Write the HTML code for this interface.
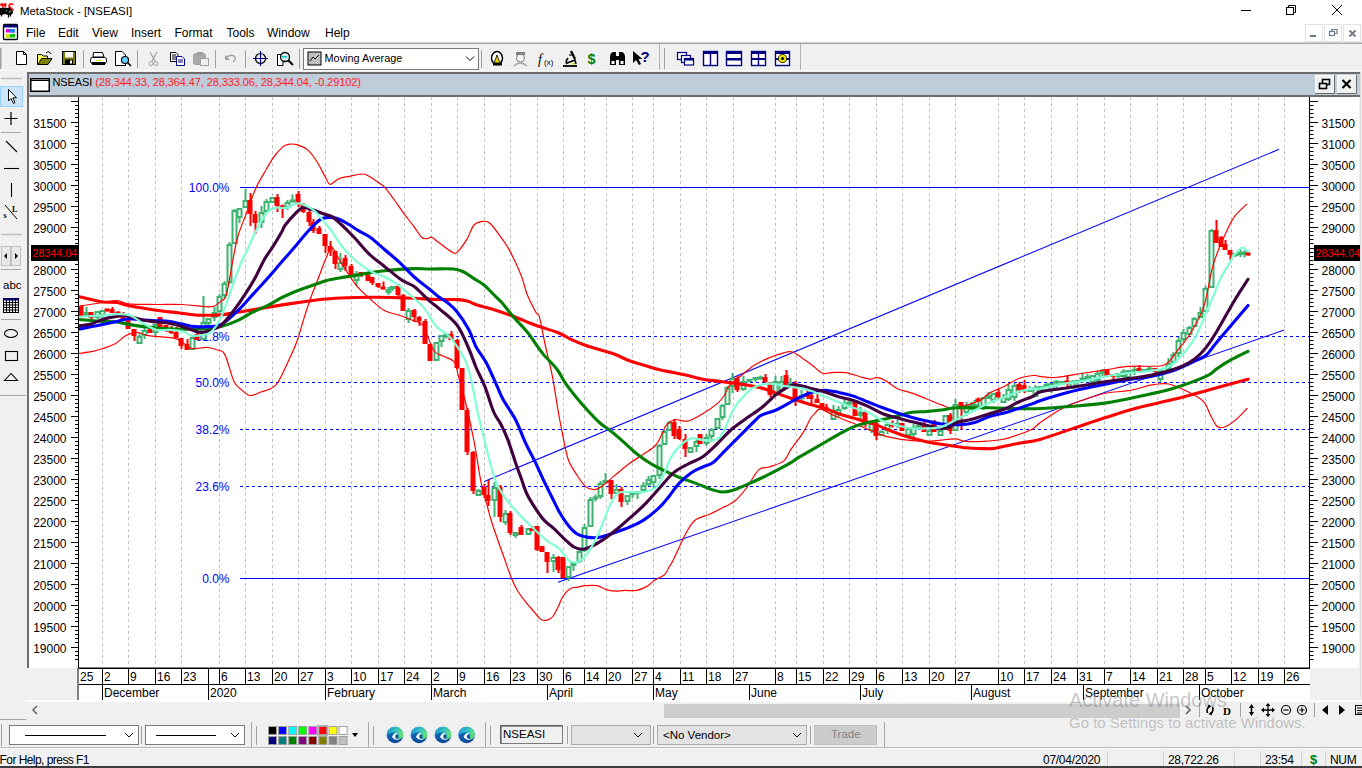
<!DOCTYPE html><html><head><meta charset='utf-8'><style>
*{margin:0;padding:0;box-sizing:border-box}
html,body{width:1362px;height:768px;overflow:hidden;background:#f0f0f0;font-family:"Liberation Sans",sans-serif;font-size:12px;color:#000}
.a{position:absolute}
.t{position:absolute;white-space:nowrap;line-height:1}
</style></head><body><div class="a" style="left:0;top:0;width:1362px;height:43px;background:#fff"></div>
<div class="a" style="left:0;top:42px;width:1362px;height:1px;background:#d0d0d0"></div>
<div class="a" style="left:0;top:43px;width:1362px;height:1px;background:#a8a8a8"></div>
<div class="t" style="left:20px;top:6px;font-size:11.4px">MetaStock - [NSEASI]</div>
<div class="t" style="left:26px;top:27px;font-size:12px">File</div>
<div class="t" style="left:58px;top:27px;font-size:12px">Edit</div>
<div class="t" style="left:92px;top:27px;font-size:12px">View</div>
<div class="t" style="left:131px;top:27px;font-size:12px">Insert</div>
<div class="t" style="left:174.5px;top:27px;font-size:12px">Format</div>
<div class="t" style="left:226.5px;top:27px;font-size:12px">Tools</div>
<div class="t" style="left:267px;top:27px;font-size:12px">Window</div>
<div class="t" style="left:325px;top:27px;font-size:12px">Help</div>
<div class="a" style="left:27px;top:72px;width:1334px;height:2px;background:#6d6d6d"></div>
<div class="a" style="left:26.5px;top:72px;width:2px;height:596px;background:#6d6d6d"></div>
<div class="a" style="left:29px;top:74px;width:1331px;height:21px;background:#bfcddb"></div>
<div class="a" style="left:27px;top:95px;width:1334px;height:2px;background:#6d6d6d"></div>
<div class="a" style="left:29px;top:97px;width:1330px;height:571px;background:#fff"></div>
<div class="a" style="left:78px;top:668px;width:1232px;height:32px;background:#fff"></div>
<div class="a" style="left:1360px;top:72px;width:1px;height:628px;background:#e0e0e0"></div>
<svg class="a" style="left:1314px;top:74px" width="46" height="21"><rect x="1" y="1" width="19" height="18" fill="#f0f0f0"/><path d="M1.5,19 V1.5 H20" fill="none" stroke="#fff"/><path d="M1,19.5 H20.5 V1" fill="none" stroke="#696969"/><rect x="5.5" y="9.5" width="7" height="5" fill="none" stroke="#000" stroke-width="1.6"/><path d="M8.5,9 V5.5 H15.5 V10.5 H13" fill="none" stroke="#000" stroke-width="1.6"/><rect x="23" y="1" width="19" height="18" fill="#f0f0f0"/><path d="M23.5,19 V1.5 H42" fill="none" stroke="#fff"/><path d="M23,19.5 H42.5 V1" fill="none" stroke="#696969"/><path d="M28.5,6 L36.5,14 M36.5,6 L28.5,14" stroke="#000" stroke-width="2.2"/></svg>
<svg class="a" style="left:29px;top:76px" width="24" height="18"><rect x="1.75" y="2.75" width="18.5" height="12.5" fill="#fff" stroke="#000" stroke-width="1.5"/><line x1="2" y1="4.5" x2="20" y2="4.5" stroke="#000" stroke-width="1"/></svg>
<div class="t" style="left:52.5px;top:77px;font-size:11px;letter-spacing:-0.1px">NSEASI <span style="color:#ff1a1a">(28,344.33, 28,364.47, 28,333.06, 28,344.04, -0.29102)</span></div>
<svg class="a" style="left:0;top:0" width="1362" height="768" viewBox="0 0 1362 768" font-family="Liberation Sans, sans-serif"><line x1="102.5" y1="97" x2="102.5" y2="668" stroke="#c0c0c0" stroke-width="1" stroke-dasharray="3,3"/><line x1="128.5" y1="97" x2="128.5" y2="668" stroke="#c0c0c0" stroke-width="1" stroke-dasharray="3,3"/><line x1="155.5" y1="97" x2="155.5" y2="668" stroke="#c0c0c0" stroke-width="1" stroke-dasharray="3,3"/><line x1="181.5" y1="97" x2="181.5" y2="668" stroke="#c0c0c0" stroke-width="1" stroke-dasharray="3,3"/><line x1="219.5" y1="97" x2="219.5" y2="668" stroke="#c0c0c0" stroke-width="1" stroke-dasharray="3,3"/><line x1="245.5" y1="97" x2="245.5" y2="668" stroke="#c0c0c0" stroke-width="1" stroke-dasharray="3,3"/><line x1="272.5" y1="97" x2="272.5" y2="668" stroke="#c0c0c0" stroke-width="1" stroke-dasharray="3,3"/><line x1="298.5" y1="97" x2="298.5" y2="668" stroke="#c0c0c0" stroke-width="1" stroke-dasharray="3,3"/><line x1="325.5" y1="97" x2="325.5" y2="668" stroke="#c0c0c0" stroke-width="1" stroke-dasharray="3,3"/><line x1="351.5" y1="97" x2="351.5" y2="668" stroke="#c0c0c0" stroke-width="1" stroke-dasharray="3,3"/><line x1="378.5" y1="97" x2="378.5" y2="668" stroke="#c0c0c0" stroke-width="1" stroke-dasharray="3,3"/><line x1="404.5" y1="97" x2="404.5" y2="668" stroke="#c0c0c0" stroke-width="1" stroke-dasharray="3,3"/><line x1="431.5" y1="97" x2="431.5" y2="668" stroke="#c0c0c0" stroke-width="1" stroke-dasharray="3,3"/><line x1="457.5" y1="97" x2="457.5" y2="668" stroke="#c0c0c0" stroke-width="1" stroke-dasharray="3,3"/><line x1="484.5" y1="97" x2="484.5" y2="668" stroke="#c0c0c0" stroke-width="1" stroke-dasharray="3,3"/><line x1="510.5" y1="97" x2="510.5" y2="668" stroke="#c0c0c0" stroke-width="1" stroke-dasharray="3,3"/><line x1="537.5" y1="97" x2="537.5" y2="668" stroke="#c0c0c0" stroke-width="1" stroke-dasharray="3,3"/><line x1="563.5" y1="97" x2="563.5" y2="668" stroke="#c0c0c0" stroke-width="1" stroke-dasharray="3,3"/><line x1="584.5" y1="97" x2="584.5" y2="668" stroke="#c0c0c0" stroke-width="1" stroke-dasharray="3,3"/><line x1="606.5" y1="97" x2="606.5" y2="668" stroke="#c0c0c0" stroke-width="1" stroke-dasharray="3,3"/><line x1="632.5" y1="97" x2="632.5" y2="668" stroke="#c0c0c0" stroke-width="1" stroke-dasharray="3,3"/><line x1="653.5" y1="97" x2="653.5" y2="668" stroke="#c0c0c0" stroke-width="1" stroke-dasharray="3,3"/><line x1="680.5" y1="97" x2="680.5" y2="668" stroke="#c0c0c0" stroke-width="1" stroke-dasharray="3,3"/><line x1="706.5" y1="97" x2="706.5" y2="668" stroke="#c0c0c0" stroke-width="1" stroke-dasharray="3,3"/><line x1="733.5" y1="97" x2="733.5" y2="668" stroke="#c0c0c0" stroke-width="1" stroke-dasharray="3,3"/><line x1="775.5" y1="97" x2="775.5" y2="668" stroke="#c0c0c0" stroke-width="1" stroke-dasharray="3,3"/><line x1="796.5" y1="97" x2="796.5" y2="668" stroke="#c0c0c0" stroke-width="1" stroke-dasharray="3,3"/><line x1="823.5" y1="97" x2="823.5" y2="668" stroke="#c0c0c0" stroke-width="1" stroke-dasharray="3,3"/><line x1="849.5" y1="97" x2="849.5" y2="668" stroke="#c0c0c0" stroke-width="1" stroke-dasharray="3,3"/><line x1="876.5" y1="97" x2="876.5" y2="668" stroke="#c0c0c0" stroke-width="1" stroke-dasharray="3,3"/><line x1="902.5" y1="97" x2="902.5" y2="668" stroke="#c0c0c0" stroke-width="1" stroke-dasharray="3,3"/><line x1="929.5" y1="97" x2="929.5" y2="668" stroke="#c0c0c0" stroke-width="1" stroke-dasharray="3,3"/><line x1="955.5" y1="97" x2="955.5" y2="668" stroke="#c0c0c0" stroke-width="1" stroke-dasharray="3,3"/><line x1="998.5" y1="97" x2="998.5" y2="668" stroke="#c0c0c0" stroke-width="1" stroke-dasharray="3,3"/><line x1="1024.5" y1="97" x2="1024.5" y2="668" stroke="#c0c0c0" stroke-width="1" stroke-dasharray="3,3"/><line x1="1051.5" y1="97" x2="1051.5" y2="668" stroke="#c0c0c0" stroke-width="1" stroke-dasharray="3,3"/><line x1="1077.5" y1="97" x2="1077.5" y2="668" stroke="#c0c0c0" stroke-width="1" stroke-dasharray="3,3"/><line x1="1104.5" y1="97" x2="1104.5" y2="668" stroke="#c0c0c0" stroke-width="1" stroke-dasharray="3,3"/><line x1="1130.5" y1="97" x2="1130.5" y2="668" stroke="#c0c0c0" stroke-width="1" stroke-dasharray="3,3"/><line x1="1157.5" y1="97" x2="1157.5" y2="668" stroke="#c0c0c0" stroke-width="1" stroke-dasharray="3,3"/><line x1="1183.5" y1="97" x2="1183.5" y2="668" stroke="#c0c0c0" stroke-width="1" stroke-dasharray="3,3"/><line x1="1205.5" y1="97" x2="1205.5" y2="668" stroke="#c0c0c0" stroke-width="1" stroke-dasharray="3,3"/><line x1="1231.5" y1="97" x2="1231.5" y2="668" stroke="#c0c0c0" stroke-width="1" stroke-dasharray="3,3"/><line x1="1258.5" y1="97" x2="1258.5" y2="668" stroke="#c0c0c0" stroke-width="1" stroke-dasharray="3,3"/><line x1="1284.5" y1="97" x2="1284.5" y2="668" stroke="#c0c0c0" stroke-width="1" stroke-dasharray="3,3"/><rect x="78" y="97" width="1" height="571" fill="#000"/><rect x="1309" y="97" width="1" height="571" fill="#000"/><line x1="71" y1="101.5" x2="78" y2="101.5" stroke="#000" stroke-width="1"/><line x1="1310" y1="101.5" x2="1318" y2="101.5" stroke="#000" stroke-width="1"/><line x1="75" y1="105.5" x2="78" y2="105.5" stroke="#000" stroke-width="1"/><line x1="1310" y1="105.5" x2="1313.5" y2="105.5" stroke="#000" stroke-width="1"/><line x1="75" y1="109.5" x2="78" y2="109.5" stroke="#000" stroke-width="1"/><line x1="1310" y1="109.5" x2="1313.5" y2="109.5" stroke="#000" stroke-width="1"/><line x1="75" y1="113.5" x2="78" y2="113.5" stroke="#000" stroke-width="1"/><line x1="1310" y1="113.5" x2="1313.5" y2="113.5" stroke="#000" stroke-width="1"/><line x1="75" y1="117.5" x2="78" y2="117.5" stroke="#000" stroke-width="1"/><line x1="1310" y1="117.5" x2="1313.5" y2="117.5" stroke="#000" stroke-width="1"/><line x1="71" y1="122.5" x2="78" y2="122.5" stroke="#000" stroke-width="1"/><line x1="1310" y1="122.5" x2="1318" y2="122.5" stroke="#000" stroke-width="1"/><line x1="75" y1="126.5" x2="78" y2="126.5" stroke="#000" stroke-width="1"/><line x1="1310" y1="126.5" x2="1313.5" y2="126.5" stroke="#000" stroke-width="1"/><line x1="75" y1="130.5" x2="78" y2="130.5" stroke="#000" stroke-width="1"/><line x1="1310" y1="130.5" x2="1313.5" y2="130.5" stroke="#000" stroke-width="1"/><line x1="75" y1="134.5" x2="78" y2="134.5" stroke="#000" stroke-width="1"/><line x1="1310" y1="134.5" x2="1313.5" y2="134.5" stroke="#000" stroke-width="1"/><line x1="75" y1="138.5" x2="78" y2="138.5" stroke="#000" stroke-width="1"/><line x1="1310" y1="138.5" x2="1313.5" y2="138.5" stroke="#000" stroke-width="1"/><line x1="71" y1="143.5" x2="78" y2="143.5" stroke="#000" stroke-width="1"/><line x1="1310" y1="143.5" x2="1318" y2="143.5" stroke="#000" stroke-width="1"/><line x1="75" y1="147.5" x2="78" y2="147.5" stroke="#000" stroke-width="1"/><line x1="1310" y1="147.5" x2="1313.5" y2="147.5" stroke="#000" stroke-width="1"/><line x1="75" y1="151.5" x2="78" y2="151.5" stroke="#000" stroke-width="1"/><line x1="1310" y1="151.5" x2="1313.5" y2="151.5" stroke="#000" stroke-width="1"/><line x1="75" y1="155.5" x2="78" y2="155.5" stroke="#000" stroke-width="1"/><line x1="1310" y1="155.5" x2="1313.5" y2="155.5" stroke="#000" stroke-width="1"/><line x1="75" y1="159.5" x2="78" y2="159.5" stroke="#000" stroke-width="1"/><line x1="1310" y1="159.5" x2="1313.5" y2="159.5" stroke="#000" stroke-width="1"/><line x1="71" y1="164.5" x2="78" y2="164.5" stroke="#000" stroke-width="1"/><line x1="1310" y1="164.5" x2="1318" y2="164.5" stroke="#000" stroke-width="1"/><line x1="75" y1="168.5" x2="78" y2="168.5" stroke="#000" stroke-width="1"/><line x1="1310" y1="168.5" x2="1313.5" y2="168.5" stroke="#000" stroke-width="1"/><line x1="75" y1="172.5" x2="78" y2="172.5" stroke="#000" stroke-width="1"/><line x1="1310" y1="172.5" x2="1313.5" y2="172.5" stroke="#000" stroke-width="1"/><line x1="75" y1="176.5" x2="78" y2="176.5" stroke="#000" stroke-width="1"/><line x1="1310" y1="176.5" x2="1313.5" y2="176.5" stroke="#000" stroke-width="1"/><line x1="75" y1="180.5" x2="78" y2="180.5" stroke="#000" stroke-width="1"/><line x1="1310" y1="180.5" x2="1313.5" y2="180.5" stroke="#000" stroke-width="1"/><line x1="71" y1="185.5" x2="78" y2="185.5" stroke="#000" stroke-width="1"/><line x1="1310" y1="185.5" x2="1318" y2="185.5" stroke="#000" stroke-width="1"/><line x1="75" y1="189.5" x2="78" y2="189.5" stroke="#000" stroke-width="1"/><line x1="1310" y1="189.5" x2="1313.5" y2="189.5" stroke="#000" stroke-width="1"/><line x1="75" y1="193.5" x2="78" y2="193.5" stroke="#000" stroke-width="1"/><line x1="1310" y1="193.5" x2="1313.5" y2="193.5" stroke="#000" stroke-width="1"/><line x1="75" y1="197.5" x2="78" y2="197.5" stroke="#000" stroke-width="1"/><line x1="1310" y1="197.5" x2="1313.5" y2="197.5" stroke="#000" stroke-width="1"/><line x1="75" y1="201.5" x2="78" y2="201.5" stroke="#000" stroke-width="1"/><line x1="1310" y1="201.5" x2="1313.5" y2="201.5" stroke="#000" stroke-width="1"/><line x1="71" y1="206.5" x2="78" y2="206.5" stroke="#000" stroke-width="1"/><line x1="1310" y1="206.5" x2="1318" y2="206.5" stroke="#000" stroke-width="1"/><line x1="75" y1="210.5" x2="78" y2="210.5" stroke="#000" stroke-width="1"/><line x1="1310" y1="210.5" x2="1313.5" y2="210.5" stroke="#000" stroke-width="1"/><line x1="75" y1="214.5" x2="78" y2="214.5" stroke="#000" stroke-width="1"/><line x1="1310" y1="214.5" x2="1313.5" y2="214.5" stroke="#000" stroke-width="1"/><line x1="75" y1="218.5" x2="78" y2="218.5" stroke="#000" stroke-width="1"/><line x1="1310" y1="218.5" x2="1313.5" y2="218.5" stroke="#000" stroke-width="1"/><line x1="75" y1="222.5" x2="78" y2="222.5" stroke="#000" stroke-width="1"/><line x1="1310" y1="222.5" x2="1313.5" y2="222.5" stroke="#000" stroke-width="1"/><line x1="71" y1="227.5" x2="78" y2="227.5" stroke="#000" stroke-width="1"/><line x1="1310" y1="227.5" x2="1318" y2="227.5" stroke="#000" stroke-width="1"/><line x1="75" y1="231.5" x2="78" y2="231.5" stroke="#000" stroke-width="1"/><line x1="1310" y1="231.5" x2="1313.5" y2="231.5" stroke="#000" stroke-width="1"/><line x1="75" y1="235.5" x2="78" y2="235.5" stroke="#000" stroke-width="1"/><line x1="1310" y1="235.5" x2="1313.5" y2="235.5" stroke="#000" stroke-width="1"/><line x1="75" y1="239.5" x2="78" y2="239.5" stroke="#000" stroke-width="1"/><line x1="1310" y1="239.5" x2="1313.5" y2="239.5" stroke="#000" stroke-width="1"/><line x1="75" y1="243.5" x2="78" y2="243.5" stroke="#000" stroke-width="1"/><line x1="1310" y1="243.5" x2="1313.5" y2="243.5" stroke="#000" stroke-width="1"/><line x1="71" y1="248.5" x2="78" y2="248.5" stroke="#000" stroke-width="1"/><line x1="1310" y1="248.5" x2="1318" y2="248.5" stroke="#000" stroke-width="1"/><line x1="75" y1="252.5" x2="78" y2="252.5" stroke="#000" stroke-width="1"/><line x1="1310" y1="252.5" x2="1313.5" y2="252.5" stroke="#000" stroke-width="1"/><line x1="75" y1="256.5" x2="78" y2="256.5" stroke="#000" stroke-width="1"/><line x1="1310" y1="256.5" x2="1313.5" y2="256.5" stroke="#000" stroke-width="1"/><line x1="75" y1="260.5" x2="78" y2="260.5" stroke="#000" stroke-width="1"/><line x1="1310" y1="260.5" x2="1313.5" y2="260.5" stroke="#000" stroke-width="1"/><line x1="75" y1="264.5" x2="78" y2="264.5" stroke="#000" stroke-width="1"/><line x1="1310" y1="264.5" x2="1313.5" y2="264.5" stroke="#000" stroke-width="1"/><line x1="71" y1="269.5" x2="78" y2="269.5" stroke="#000" stroke-width="1"/><line x1="1310" y1="269.5" x2="1318" y2="269.5" stroke="#000" stroke-width="1"/><line x1="75" y1="273.5" x2="78" y2="273.5" stroke="#000" stroke-width="1"/><line x1="1310" y1="273.5" x2="1313.5" y2="273.5" stroke="#000" stroke-width="1"/><line x1="75" y1="277.5" x2="78" y2="277.5" stroke="#000" stroke-width="1"/><line x1="1310" y1="277.5" x2="1313.5" y2="277.5" stroke="#000" stroke-width="1"/><line x1="75" y1="281.5" x2="78" y2="281.5" stroke="#000" stroke-width="1"/><line x1="1310" y1="281.5" x2="1313.5" y2="281.5" stroke="#000" stroke-width="1"/><line x1="75" y1="285.5" x2="78" y2="285.5" stroke="#000" stroke-width="1"/><line x1="1310" y1="285.5" x2="1313.5" y2="285.5" stroke="#000" stroke-width="1"/><line x1="71" y1="290.5" x2="78" y2="290.5" stroke="#000" stroke-width="1"/><line x1="1310" y1="290.5" x2="1318" y2="290.5" stroke="#000" stroke-width="1"/><line x1="75" y1="294.5" x2="78" y2="294.5" stroke="#000" stroke-width="1"/><line x1="1310" y1="294.5" x2="1313.5" y2="294.5" stroke="#000" stroke-width="1"/><line x1="75" y1="298.5" x2="78" y2="298.5" stroke="#000" stroke-width="1"/><line x1="1310" y1="298.5" x2="1313.5" y2="298.5" stroke="#000" stroke-width="1"/><line x1="75" y1="302.5" x2="78" y2="302.5" stroke="#000" stroke-width="1"/><line x1="1310" y1="302.5" x2="1313.5" y2="302.5" stroke="#000" stroke-width="1"/><line x1="75" y1="306.5" x2="78" y2="306.5" stroke="#000" stroke-width="1"/><line x1="1310" y1="306.5" x2="1313.5" y2="306.5" stroke="#000" stroke-width="1"/><line x1="71" y1="311.5" x2="78" y2="311.5" stroke="#000" stroke-width="1"/><line x1="1310" y1="311.5" x2="1318" y2="311.5" stroke="#000" stroke-width="1"/><line x1="75" y1="315.5" x2="78" y2="315.5" stroke="#000" stroke-width="1"/><line x1="1310" y1="315.5" x2="1313.5" y2="315.5" stroke="#000" stroke-width="1"/><line x1="75" y1="319.5" x2="78" y2="319.5" stroke="#000" stroke-width="1"/><line x1="1310" y1="319.5" x2="1313.5" y2="319.5" stroke="#000" stroke-width="1"/><line x1="75" y1="323.5" x2="78" y2="323.5" stroke="#000" stroke-width="1"/><line x1="1310" y1="323.5" x2="1313.5" y2="323.5" stroke="#000" stroke-width="1"/><line x1="75" y1="327.5" x2="78" y2="327.5" stroke="#000" stroke-width="1"/><line x1="1310" y1="327.5" x2="1313.5" y2="327.5" stroke="#000" stroke-width="1"/><line x1="71" y1="332.5" x2="78" y2="332.5" stroke="#000" stroke-width="1"/><line x1="1310" y1="332.5" x2="1318" y2="332.5" stroke="#000" stroke-width="1"/><line x1="75" y1="336.5" x2="78" y2="336.5" stroke="#000" stroke-width="1"/><line x1="1310" y1="336.5" x2="1313.5" y2="336.5" stroke="#000" stroke-width="1"/><line x1="75" y1="340.5" x2="78" y2="340.5" stroke="#000" stroke-width="1"/><line x1="1310" y1="340.5" x2="1313.5" y2="340.5" stroke="#000" stroke-width="1"/><line x1="75" y1="344.5" x2="78" y2="344.5" stroke="#000" stroke-width="1"/><line x1="1310" y1="344.5" x2="1313.5" y2="344.5" stroke="#000" stroke-width="1"/><line x1="75" y1="348.5" x2="78" y2="348.5" stroke="#000" stroke-width="1"/><line x1="1310" y1="348.5" x2="1313.5" y2="348.5" stroke="#000" stroke-width="1"/><line x1="71" y1="353.5" x2="78" y2="353.5" stroke="#000" stroke-width="1"/><line x1="1310" y1="353.5" x2="1318" y2="353.5" stroke="#000" stroke-width="1"/><line x1="75" y1="357.5" x2="78" y2="357.5" stroke="#000" stroke-width="1"/><line x1="1310" y1="357.5" x2="1313.5" y2="357.5" stroke="#000" stroke-width="1"/><line x1="75" y1="361.5" x2="78" y2="361.5" stroke="#000" stroke-width="1"/><line x1="1310" y1="361.5" x2="1313.5" y2="361.5" stroke="#000" stroke-width="1"/><line x1="75" y1="365.5" x2="78" y2="365.5" stroke="#000" stroke-width="1"/><line x1="1310" y1="365.5" x2="1313.5" y2="365.5" stroke="#000" stroke-width="1"/><line x1="75" y1="369.5" x2="78" y2="369.5" stroke="#000" stroke-width="1"/><line x1="1310" y1="369.5" x2="1313.5" y2="369.5" stroke="#000" stroke-width="1"/><line x1="71" y1="374.5" x2="78" y2="374.5" stroke="#000" stroke-width="1"/><line x1="1310" y1="374.5" x2="1318" y2="374.5" stroke="#000" stroke-width="1"/><line x1="75" y1="378.5" x2="78" y2="378.5" stroke="#000" stroke-width="1"/><line x1="1310" y1="378.5" x2="1313.5" y2="378.5" stroke="#000" stroke-width="1"/><line x1="75" y1="382.5" x2="78" y2="382.5" stroke="#000" stroke-width="1"/><line x1="1310" y1="382.5" x2="1313.5" y2="382.5" stroke="#000" stroke-width="1"/><line x1="75" y1="386.5" x2="78" y2="386.5" stroke="#000" stroke-width="1"/><line x1="1310" y1="386.5" x2="1313.5" y2="386.5" stroke="#000" stroke-width="1"/><line x1="75" y1="390.5" x2="78" y2="390.5" stroke="#000" stroke-width="1"/><line x1="1310" y1="390.5" x2="1313.5" y2="390.5" stroke="#000" stroke-width="1"/><line x1="71" y1="395.5" x2="78" y2="395.5" stroke="#000" stroke-width="1"/><line x1="1310" y1="395.5" x2="1318" y2="395.5" stroke="#000" stroke-width="1"/><line x1="75" y1="399.5" x2="78" y2="399.5" stroke="#000" stroke-width="1"/><line x1="1310" y1="399.5" x2="1313.5" y2="399.5" stroke="#000" stroke-width="1"/><line x1="75" y1="403.5" x2="78" y2="403.5" stroke="#000" stroke-width="1"/><line x1="1310" y1="403.5" x2="1313.5" y2="403.5" stroke="#000" stroke-width="1"/><line x1="75" y1="407.5" x2="78" y2="407.5" stroke="#000" stroke-width="1"/><line x1="1310" y1="407.5" x2="1313.5" y2="407.5" stroke="#000" stroke-width="1"/><line x1="75" y1="411.5" x2="78" y2="411.5" stroke="#000" stroke-width="1"/><line x1="1310" y1="411.5" x2="1313.5" y2="411.5" stroke="#000" stroke-width="1"/><line x1="71" y1="416.5" x2="78" y2="416.5" stroke="#000" stroke-width="1"/><line x1="1310" y1="416.5" x2="1318" y2="416.5" stroke="#000" stroke-width="1"/><line x1="75" y1="420.5" x2="78" y2="420.5" stroke="#000" stroke-width="1"/><line x1="1310" y1="420.5" x2="1313.5" y2="420.5" stroke="#000" stroke-width="1"/><line x1="75" y1="424.5" x2="78" y2="424.5" stroke="#000" stroke-width="1"/><line x1="1310" y1="424.5" x2="1313.5" y2="424.5" stroke="#000" stroke-width="1"/><line x1="75" y1="428.5" x2="78" y2="428.5" stroke="#000" stroke-width="1"/><line x1="1310" y1="428.5" x2="1313.5" y2="428.5" stroke="#000" stroke-width="1"/><line x1="75" y1="432.5" x2="78" y2="432.5" stroke="#000" stroke-width="1"/><line x1="1310" y1="432.5" x2="1313.5" y2="432.5" stroke="#000" stroke-width="1"/><line x1="71" y1="437.5" x2="78" y2="437.5" stroke="#000" stroke-width="1"/><line x1="1310" y1="437.5" x2="1318" y2="437.5" stroke="#000" stroke-width="1"/><line x1="75" y1="441.5" x2="78" y2="441.5" stroke="#000" stroke-width="1"/><line x1="1310" y1="441.5" x2="1313.5" y2="441.5" stroke="#000" stroke-width="1"/><line x1="75" y1="445.5" x2="78" y2="445.5" stroke="#000" stroke-width="1"/><line x1="1310" y1="445.5" x2="1313.5" y2="445.5" stroke="#000" stroke-width="1"/><line x1="75" y1="449.5" x2="78" y2="449.5" stroke="#000" stroke-width="1"/><line x1="1310" y1="449.5" x2="1313.5" y2="449.5" stroke="#000" stroke-width="1"/><line x1="75" y1="453.5" x2="78" y2="453.5" stroke="#000" stroke-width="1"/><line x1="1310" y1="453.5" x2="1313.5" y2="453.5" stroke="#000" stroke-width="1"/><line x1="71" y1="458.5" x2="78" y2="458.5" stroke="#000" stroke-width="1"/><line x1="1310" y1="458.5" x2="1318" y2="458.5" stroke="#000" stroke-width="1"/><line x1="75" y1="462.5" x2="78" y2="462.5" stroke="#000" stroke-width="1"/><line x1="1310" y1="462.5" x2="1313.5" y2="462.5" stroke="#000" stroke-width="1"/><line x1="75" y1="466.5" x2="78" y2="466.5" stroke="#000" stroke-width="1"/><line x1="1310" y1="466.5" x2="1313.5" y2="466.5" stroke="#000" stroke-width="1"/><line x1="75" y1="470.5" x2="78" y2="470.5" stroke="#000" stroke-width="1"/><line x1="1310" y1="470.5" x2="1313.5" y2="470.5" stroke="#000" stroke-width="1"/><line x1="75" y1="474.5" x2="78" y2="474.5" stroke="#000" stroke-width="1"/><line x1="1310" y1="474.5" x2="1313.5" y2="474.5" stroke="#000" stroke-width="1"/><line x1="71" y1="479.5" x2="78" y2="479.5" stroke="#000" stroke-width="1"/><line x1="1310" y1="479.5" x2="1318" y2="479.5" stroke="#000" stroke-width="1"/><line x1="75" y1="483.5" x2="78" y2="483.5" stroke="#000" stroke-width="1"/><line x1="1310" y1="483.5" x2="1313.5" y2="483.5" stroke="#000" stroke-width="1"/><line x1="75" y1="487.5" x2="78" y2="487.5" stroke="#000" stroke-width="1"/><line x1="1310" y1="487.5" x2="1313.5" y2="487.5" stroke="#000" stroke-width="1"/><line x1="75" y1="491.5" x2="78" y2="491.5" stroke="#000" stroke-width="1"/><line x1="1310" y1="491.5" x2="1313.5" y2="491.5" stroke="#000" stroke-width="1"/><line x1="75" y1="495.5" x2="78" y2="495.5" stroke="#000" stroke-width="1"/><line x1="1310" y1="495.5" x2="1313.5" y2="495.5" stroke="#000" stroke-width="1"/><line x1="71" y1="500.5" x2="78" y2="500.5" stroke="#000" stroke-width="1"/><line x1="1310" y1="500.5" x2="1318" y2="500.5" stroke="#000" stroke-width="1"/><line x1="75" y1="504.5" x2="78" y2="504.5" stroke="#000" stroke-width="1"/><line x1="1310" y1="504.5" x2="1313.5" y2="504.5" stroke="#000" stroke-width="1"/><line x1="75" y1="508.5" x2="78" y2="508.5" stroke="#000" stroke-width="1"/><line x1="1310" y1="508.5" x2="1313.5" y2="508.5" stroke="#000" stroke-width="1"/><line x1="75" y1="512.5" x2="78" y2="512.5" stroke="#000" stroke-width="1"/><line x1="1310" y1="512.5" x2="1313.5" y2="512.5" stroke="#000" stroke-width="1"/><line x1="75" y1="516.5" x2="78" y2="516.5" stroke="#000" stroke-width="1"/><line x1="1310" y1="516.5" x2="1313.5" y2="516.5" stroke="#000" stroke-width="1"/><line x1="71" y1="521.5" x2="78" y2="521.5" stroke="#000" stroke-width="1"/><line x1="1310" y1="521.5" x2="1318" y2="521.5" stroke="#000" stroke-width="1"/><line x1="75" y1="525.5" x2="78" y2="525.5" stroke="#000" stroke-width="1"/><line x1="1310" y1="525.5" x2="1313.5" y2="525.5" stroke="#000" stroke-width="1"/><line x1="75" y1="529.5" x2="78" y2="529.5" stroke="#000" stroke-width="1"/><line x1="1310" y1="529.5" x2="1313.5" y2="529.5" stroke="#000" stroke-width="1"/><line x1="75" y1="533.5" x2="78" y2="533.5" stroke="#000" stroke-width="1"/><line x1="1310" y1="533.5" x2="1313.5" y2="533.5" stroke="#000" stroke-width="1"/><line x1="75" y1="537.5" x2="78" y2="537.5" stroke="#000" stroke-width="1"/><line x1="1310" y1="537.5" x2="1313.5" y2="537.5" stroke="#000" stroke-width="1"/><line x1="71" y1="542.5" x2="78" y2="542.5" stroke="#000" stroke-width="1"/><line x1="1310" y1="542.5" x2="1318" y2="542.5" stroke="#000" stroke-width="1"/><line x1="75" y1="546.5" x2="78" y2="546.5" stroke="#000" stroke-width="1"/><line x1="1310" y1="546.5" x2="1313.5" y2="546.5" stroke="#000" stroke-width="1"/><line x1="75" y1="550.5" x2="78" y2="550.5" stroke="#000" stroke-width="1"/><line x1="1310" y1="550.5" x2="1313.5" y2="550.5" stroke="#000" stroke-width="1"/><line x1="75" y1="554.5" x2="78" y2="554.5" stroke="#000" stroke-width="1"/><line x1="1310" y1="554.5" x2="1313.5" y2="554.5" stroke="#000" stroke-width="1"/><line x1="75" y1="558.5" x2="78" y2="558.5" stroke="#000" stroke-width="1"/><line x1="1310" y1="558.5" x2="1313.5" y2="558.5" stroke="#000" stroke-width="1"/><line x1="71" y1="563.5" x2="78" y2="563.5" stroke="#000" stroke-width="1"/><line x1="1310" y1="563.5" x2="1318" y2="563.5" stroke="#000" stroke-width="1"/><line x1="75" y1="567.5" x2="78" y2="567.5" stroke="#000" stroke-width="1"/><line x1="1310" y1="567.5" x2="1313.5" y2="567.5" stroke="#000" stroke-width="1"/><line x1="75" y1="571.5" x2="78" y2="571.5" stroke="#000" stroke-width="1"/><line x1="1310" y1="571.5" x2="1313.5" y2="571.5" stroke="#000" stroke-width="1"/><line x1="75" y1="575.5" x2="78" y2="575.5" stroke="#000" stroke-width="1"/><line x1="1310" y1="575.5" x2="1313.5" y2="575.5" stroke="#000" stroke-width="1"/><line x1="75" y1="579.5" x2="78" y2="579.5" stroke="#000" stroke-width="1"/><line x1="1310" y1="579.5" x2="1313.5" y2="579.5" stroke="#000" stroke-width="1"/><line x1="71" y1="584.5" x2="78" y2="584.5" stroke="#000" stroke-width="1"/><line x1="1310" y1="584.5" x2="1318" y2="584.5" stroke="#000" stroke-width="1"/><line x1="75" y1="588.5" x2="78" y2="588.5" stroke="#000" stroke-width="1"/><line x1="1310" y1="588.5" x2="1313.5" y2="588.5" stroke="#000" stroke-width="1"/><line x1="75" y1="592.5" x2="78" y2="592.5" stroke="#000" stroke-width="1"/><line x1="1310" y1="592.5" x2="1313.5" y2="592.5" stroke="#000" stroke-width="1"/><line x1="75" y1="596.5" x2="78" y2="596.5" stroke="#000" stroke-width="1"/><line x1="1310" y1="596.5" x2="1313.5" y2="596.5" stroke="#000" stroke-width="1"/><line x1="75" y1="600.5" x2="78" y2="600.5" stroke="#000" stroke-width="1"/><line x1="1310" y1="600.5" x2="1313.5" y2="600.5" stroke="#000" stroke-width="1"/><line x1="71" y1="605.5" x2="78" y2="605.5" stroke="#000" stroke-width="1"/><line x1="1310" y1="605.5" x2="1318" y2="605.5" stroke="#000" stroke-width="1"/><line x1="75" y1="609.5" x2="78" y2="609.5" stroke="#000" stroke-width="1"/><line x1="1310" y1="609.5" x2="1313.5" y2="609.5" stroke="#000" stroke-width="1"/><line x1="75" y1="613.5" x2="78" y2="613.5" stroke="#000" stroke-width="1"/><line x1="1310" y1="613.5" x2="1313.5" y2="613.5" stroke="#000" stroke-width="1"/><line x1="75" y1="617.5" x2="78" y2="617.5" stroke="#000" stroke-width="1"/><line x1="1310" y1="617.5" x2="1313.5" y2="617.5" stroke="#000" stroke-width="1"/><line x1="75" y1="621.5" x2="78" y2="621.5" stroke="#000" stroke-width="1"/><line x1="1310" y1="621.5" x2="1313.5" y2="621.5" stroke="#000" stroke-width="1"/><line x1="71" y1="626.5" x2="78" y2="626.5" stroke="#000" stroke-width="1"/><line x1="1310" y1="626.5" x2="1318" y2="626.5" stroke="#000" stroke-width="1"/><line x1="75" y1="630.5" x2="78" y2="630.5" stroke="#000" stroke-width="1"/><line x1="1310" y1="630.5" x2="1313.5" y2="630.5" stroke="#000" stroke-width="1"/><line x1="75" y1="634.5" x2="78" y2="634.5" stroke="#000" stroke-width="1"/><line x1="1310" y1="634.5" x2="1313.5" y2="634.5" stroke="#000" stroke-width="1"/><line x1="75" y1="638.5" x2="78" y2="638.5" stroke="#000" stroke-width="1"/><line x1="1310" y1="638.5" x2="1313.5" y2="638.5" stroke="#000" stroke-width="1"/><line x1="75" y1="642.5" x2="78" y2="642.5" stroke="#000" stroke-width="1"/><line x1="1310" y1="642.5" x2="1313.5" y2="642.5" stroke="#000" stroke-width="1"/><line x1="71" y1="647.5" x2="78" y2="647.5" stroke="#000" stroke-width="1"/><line x1="1310" y1="647.5" x2="1318" y2="647.5" stroke="#000" stroke-width="1"/><line x1="75" y1="651.5" x2="78" y2="651.5" stroke="#000" stroke-width="1"/><line x1="1310" y1="651.5" x2="1313.5" y2="651.5" stroke="#000" stroke-width="1"/><line x1="75" y1="655.5" x2="78" y2="655.5" stroke="#000" stroke-width="1"/><line x1="1310" y1="655.5" x2="1313.5" y2="655.5" stroke="#000" stroke-width="1"/><line x1="75" y1="659.5" x2="78" y2="659.5" stroke="#000" stroke-width="1"/><line x1="1310" y1="659.5" x2="1313.5" y2="659.5" stroke="#000" stroke-width="1"/><text x="66.5" y="128.0" text-anchor="end" font-size="12" fill="#000">31500</text><text x="1321.5" y="128.0" font-size="12" fill="#000">31500</text><text x="66.5" y="149.0" text-anchor="end" font-size="12" fill="#000">31000</text><text x="1321.5" y="149.0" font-size="12" fill="#000">31000</text><text x="66.5" y="170.0" text-anchor="end" font-size="12" fill="#000">30500</text><text x="1321.5" y="170.0" font-size="12" fill="#000">30500</text><text x="66.5" y="191.0" text-anchor="end" font-size="12" fill="#000">30000</text><text x="1321.5" y="191.0" font-size="12" fill="#000">30000</text><text x="66.5" y="212.0" text-anchor="end" font-size="12" fill="#000">29500</text><text x="1321.5" y="212.0" font-size="12" fill="#000">29500</text><text x="66.5" y="233.0" text-anchor="end" font-size="12" fill="#000">29000</text><text x="1321.5" y="233.0" font-size="12" fill="#000">29000</text><text x="66.5" y="254.0" text-anchor="end" font-size="12" fill="#000">28500</text><text x="1321.5" y="254.0" font-size="12" fill="#000">28500</text><text x="66.5" y="275.0" text-anchor="end" font-size="12" fill="#000">28000</text><text x="1321.5" y="275.0" font-size="12" fill="#000">28000</text><text x="66.5" y="296.0" text-anchor="end" font-size="12" fill="#000">27500</text><text x="1321.5" y="296.0" font-size="12" fill="#000">27500</text><text x="66.5" y="317.0" text-anchor="end" font-size="12" fill="#000">27000</text><text x="1321.5" y="317.0" font-size="12" fill="#000">27000</text><text x="66.5" y="338.0" text-anchor="end" font-size="12" fill="#000">26500</text><text x="1321.5" y="338.0" font-size="12" fill="#000">26500</text><text x="66.5" y="359.0" text-anchor="end" font-size="12" fill="#000">26000</text><text x="1321.5" y="359.0" font-size="12" fill="#000">26000</text><text x="66.5" y="380.0" text-anchor="end" font-size="12" fill="#000">25500</text><text x="1321.5" y="380.0" font-size="12" fill="#000">25500</text><text x="66.5" y="401.0" text-anchor="end" font-size="12" fill="#000">25000</text><text x="1321.5" y="401.0" font-size="12" fill="#000">25000</text><text x="66.5" y="422.0" text-anchor="end" font-size="12" fill="#000">24500</text><text x="1321.5" y="422.0" font-size="12" fill="#000">24500</text><text x="66.5" y="443.0" text-anchor="end" font-size="12" fill="#000">24000</text><text x="1321.5" y="443.0" font-size="12" fill="#000">24000</text><text x="66.5" y="464.0" text-anchor="end" font-size="12" fill="#000">23500</text><text x="1321.5" y="464.0" font-size="12" fill="#000">23500</text><text x="66.5" y="485.0" text-anchor="end" font-size="12" fill="#000">23000</text><text x="1321.5" y="485.0" font-size="12" fill="#000">23000</text><text x="66.5" y="506.0" text-anchor="end" font-size="12" fill="#000">22500</text><text x="1321.5" y="506.0" font-size="12" fill="#000">22500</text><text x="66.5" y="527.0" text-anchor="end" font-size="12" fill="#000">22000</text><text x="1321.5" y="527.0" font-size="12" fill="#000">22000</text><text x="66.5" y="548.0" text-anchor="end" font-size="12" fill="#000">21500</text><text x="1321.5" y="548.0" font-size="12" fill="#000">21500</text><text x="66.5" y="569.0" text-anchor="end" font-size="12" fill="#000">21000</text><text x="1321.5" y="569.0" font-size="12" fill="#000">21000</text><text x="66.5" y="590.0" text-anchor="end" font-size="12" fill="#000">20500</text><text x="1321.5" y="590.0" font-size="12" fill="#000">20500</text><text x="66.5" y="611.0" text-anchor="end" font-size="12" fill="#000">20000</text><text x="1321.5" y="611.0" font-size="12" fill="#000">20000</text><text x="66.5" y="632.0" text-anchor="end" font-size="12" fill="#000">19500</text><text x="1321.5" y="632.0" font-size="12" fill="#000">19500</text><text x="66.5" y="653.0" text-anchor="end" font-size="12" fill="#000">19000</text><text x="1321.5" y="653.0" font-size="12" fill="#000">19000</text><text x="229.5" y="191.8" text-anchor="end" font-size="12" fill="#0000ff">100.0%</text><line x1="240" y1="187.5" x2="1309" y2="187.5" stroke="#0000ff" stroke-width="1"/><text x="229.5" y="340.8" text-anchor="end" font-size="12" fill="#0000ff">61.8%</text><line x1="240" y1="336.5" x2="1309" y2="336.5" stroke="#0000ff" stroke-width="1" stroke-dasharray="3,3"/><text x="229.5" y="386.8" text-anchor="end" font-size="12" fill="#0000ff">50.0%</text><line x1="240" y1="382.5" x2="1309" y2="382.5" stroke="#0000ff" stroke-width="1" stroke-dasharray="3,3"/><text x="229.5" y="433.8" text-anchor="end" font-size="12" fill="#0000ff">38.2%</text><line x1="240" y1="429.5" x2="1309" y2="429.5" stroke="#0000ff" stroke-width="1" stroke-dasharray="3,3"/><text x="229.5" y="490.8" text-anchor="end" font-size="12" fill="#0000ff">23.6%</text><line x1="240" y1="486.5" x2="1309" y2="486.5" stroke="#0000ff" stroke-width="1" stroke-dasharray="3,3"/><text x="229.5" y="582.8" text-anchor="end" font-size="12" fill="#0000ff">0.0%</text><line x1="240" y1="578.5" x2="1309" y2="578.5" stroke="#0000ff" stroke-width="1"/><line x1="484.3" y1="481.5" x2="1279" y2="149.3" stroke="#0000ff" stroke-width="1.05"/><line x1="558" y1="582.3" x2="1284" y2="330.1" stroke="#0000ff" stroke-width="1.05"/><defs><clipPath id="pc"><rect x="79" y="97" width="1230" height="570"/></clipPath></defs><g clip-path="url(#pc)"><rect x="80.5" y="305.0" width="2" height="11.0" fill="#ff0000"/><rect x="78.5" y="306.0" width="5" height="10.0" fill="#ff0000"/><rect x="85.5" y="307.0" width="2" height="9.0" fill="#3cb371"/><rect x="84.5" y="313.0" width="4" height="2.0" fill="#fff" stroke="#3cb371" stroke-width="2"/><rect x="90.5" y="312.0" width="2" height="9.0" fill="#ff0000"/><rect x="88.5" y="312.0" width="5" height="6.0" fill="#ff0000"/><rect x="96.5" y="311.0" width="2" height="8.0" fill="#3cb371"/><rect x="95.5" y="312.0" width="4" height="5.0" fill="#fff" stroke="#3cb371" stroke-width="2"/><rect x="101.5" y="310.0" width="2" height="9.0" fill="#3cb371"/><rect x="100.5" y="311.0" width="4" height="4.0" fill="#fff" stroke="#3cb371" stroke-width="2"/><rect x="106.5" y="308.5" width="2" height="3.0" fill="#ff0000"/><rect x="104.5" y="308.5" width="5" height="3.0" fill="#ff0000"/><rect x="111.5" y="307.0" width="2" height="6.0" fill="#ff0000"/><rect x="109.5" y="309.0" width="5" height="4.0" fill="#ff0000"/><rect x="117.5" y="311.5" width="2" height="6.0" fill="#ff0000"/><rect x="115.5" y="311.5" width="5" height="3.0" fill="#ff0000"/><rect x="122.5" y="312.0" width="2" height="8.0" fill="#ff0000"/><rect x="120.5" y="314.0" width="5" height="6.0" fill="#ff0000"/><rect x="127.5" y="317.0" width="2" height="12.0" fill="#ff0000"/><rect x="125.5" y="320.0" width="5" height="9.0" fill="#ff0000"/><rect x="133.5" y="329.0" width="2" height="12.0" fill="#ff0000"/><rect x="131.5" y="329.0" width="5" height="7.0" fill="#ff0000"/><rect x="138.5" y="333.0" width="2" height="11.0" fill="#3cb371"/><rect x="137.5" y="337.0" width="4" height="6.0" fill="#fff" stroke="#3cb371" stroke-width="2"/><rect x="143.5" y="327.0" width="2" height="12.0" fill="#3cb371"/><rect x="142.5" y="331.0" width="4" height="4.0" fill="#fff" stroke="#3cb371" stroke-width="2"/><rect x="149.5" y="329.0" width="2" height="4.0" fill="#ff0000"/><rect x="147.5" y="329.0" width="5" height="4.0" fill="#ff0000"/><rect x="154.5" y="324.0" width="2" height="12.0" fill="#3cb371"/><rect x="153.5" y="325.0" width="4" height="7.0" fill="#fff" stroke="#3cb371" stroke-width="2"/><rect x="159.5" y="317.0" width="2" height="11.0" fill="#ff0000"/><rect x="157.5" y="317.0" width="5" height="10.0" fill="#ff0000"/><rect x="165.5" y="325.0" width="2" height="7.0" fill="#ff0000"/><rect x="163.5" y="325.0" width="5" height="4.0" fill="#ff0000"/><rect x="170.5" y="326.0" width="2" height="8.0" fill="#ff0000"/><rect x="168.5" y="329.0" width="5" height="4.0" fill="#ff0000"/><rect x="175.5" y="327.0" width="2" height="11.0" fill="#ff0000"/><rect x="173.5" y="332.0" width="5" height="6.0" fill="#ff0000"/><rect x="180.5" y="338.0" width="2" height="11.0" fill="#ff0000"/><rect x="178.5" y="338.0" width="5" height="8.0" fill="#ff0000"/><rect x="186.5" y="339.0" width="2" height="11.0" fill="#ff0000"/><rect x="184.5" y="344.0" width="5" height="6.0" fill="#ff0000"/><rect x="191.5" y="336.0" width="2" height="14.0" fill="#3cb371"/><rect x="190.5" y="338.0" width="4" height="11.0" fill="#fff" stroke="#3cb371" stroke-width="2"/><rect x="196.5" y="329.0" width="2" height="11.0" fill="#ff0000"/><rect x="194.5" y="334.0" width="5" height="6.0" fill="#ff0000"/><rect x="202.5" y="296.0" width="2" height="44.0" fill="#3cb371"/><rect x="201.5" y="323.0" width="4" height="16.0" fill="#fff" stroke="#3cb371" stroke-width="2"/><rect x="207.5" y="318.0" width="2" height="8.0" fill="#3cb371"/><rect x="206.5" y="319.0" width="4" height="4.0" fill="#fff" stroke="#3cb371" stroke-width="2"/><rect x="213.5" y="307.0" width="2" height="14.0" fill="#3cb371"/><rect x="212.5" y="313.0" width="4" height="4.0" fill="#fff" stroke="#3cb371" stroke-width="2"/><rect x="218.5" y="294.0" width="2" height="19.0" fill="#3cb371"/><rect x="217.5" y="297.0" width="4" height="14.0" fill="#fff" stroke="#3cb371" stroke-width="2"/><rect x="223.5" y="281.0" width="2" height="18.0" fill="#3cb371"/><rect x="222.5" y="284.0" width="4" height="11.0" fill="#fff" stroke="#3cb371" stroke-width="2"/><rect x="228.5" y="242.0" width="2" height="42.0" fill="#3cb371"/><rect x="227.5" y="245.0" width="4" height="37.0" fill="#fff" stroke="#3cb371" stroke-width="2"/><rect x="233.5" y="209.0" width="2" height="35.0" fill="#3cb371"/><rect x="232.5" y="211.0" width="4" height="32.0" fill="#fff" stroke="#3cb371" stroke-width="2"/><rect x="238.5" y="208.0" width="2" height="15.0" fill="#3cb371"/><rect x="237.5" y="209.0" width="4" height="8.0" fill="#fff" stroke="#3cb371" stroke-width="2"/><rect x="244.5" y="189.0" width="2" height="19.0" fill="#3cb371"/><rect x="243.5" y="201.0" width="4" height="6.0" fill="#fff" stroke="#3cb371" stroke-width="2"/><rect x="249.5" y="193.0" width="2" height="33.0" fill="#ff0000"/><rect x="247.5" y="200.0" width="5" height="14.0" fill="#ff0000"/><rect x="254.5" y="211.0" width="2" height="23.0" fill="#ff0000"/><rect x="252.5" y="214.0" width="5" height="9.0" fill="#ff0000"/><rect x="260.5" y="206.0" width="2" height="22.0" fill="#3cb371"/><rect x="259.5" y="213.0" width="4" height="9.0" fill="#fff" stroke="#3cb371" stroke-width="2"/><rect x="265.5" y="199.0" width="2" height="14.0" fill="#3cb371"/><rect x="264.5" y="202.0" width="4" height="9.0" fill="#fff" stroke="#3cb371" stroke-width="2"/><rect x="271.5" y="197.0" width="2" height="6.0" fill="#3cb371"/><rect x="270.5" y="198.0" width="4" height="4.0" fill="#fff" stroke="#3cb371" stroke-width="2"/><rect x="276.5" y="194.0" width="2" height="18.0" fill="#ff0000"/><rect x="274.5" y="197.0" width="5" height="9.0" fill="#ff0000"/><rect x="281.5" y="204.5" width="2" height="13.5" fill="#ff0000"/><rect x="279.5" y="205.5" width="5" height="3.0" fill="#ff0000"/><rect x="286.5" y="200.0" width="2" height="10.0" fill="#3cb371"/><rect x="285.5" y="203.0" width="4" height="4.0" fill="#fff" stroke="#3cb371" stroke-width="2"/><rect x="291.5" y="194.5" width="2" height="8.0" fill="#3cb371"/><rect x="290.5" y="200.5" width="4" height="1.0" fill="#fff" stroke="#3cb371" stroke-width="2"/><rect x="297.5" y="191.0" width="2" height="16.0" fill="#ff0000"/><rect x="295.5" y="194.0" width="5" height="10.0" fill="#ff0000"/><rect x="302.5" y="203.0" width="2" height="10.0" fill="#ff0000"/><rect x="300.5" y="204.0" width="5" height="8.0" fill="#ff0000"/><rect x="308.5" y="207.0" width="2" height="19.0" fill="#ff0000"/><rect x="306.5" y="212.0" width="5" height="10.0" fill="#ff0000"/><rect x="312.5" y="219.0" width="2" height="14.0" fill="#ff0000"/><rect x="310.5" y="222.0" width="5" height="9.0" fill="#ff0000"/><rect x="318.5" y="226.0" width="2" height="8.0" fill="#ff0000"/><rect x="316.5" y="228.0" width="5" height="6.0" fill="#ff0000"/><rect x="324.5" y="234.0" width="2" height="19.0" fill="#ff0000"/><rect x="322.5" y="234.0" width="5" height="12.0" fill="#ff0000"/><rect x="329.5" y="241.0" width="2" height="15.0" fill="#ff0000"/><rect x="327.5" y="246.0" width="5" height="5.0" fill="#ff0000"/><rect x="334.5" y="251.0" width="2" height="18.0" fill="#ff0000"/><rect x="332.5" y="251.0" width="5" height="13.0" fill="#ff0000"/><rect x="339.5" y="253.0" width="2" height="19.0" fill="#3cb371"/><rect x="338.5" y="263.0" width="4" height="6.0" fill="#fff" stroke="#3cb371" stroke-width="2"/><rect x="344.5" y="255.0" width="2" height="16.0" fill="#ff0000"/><rect x="342.5" y="258.0" width="5" height="8.0" fill="#ff0000"/><rect x="350.5" y="264.0" width="2" height="13.0" fill="#ff0000"/><rect x="348.5" y="266.0" width="5" height="10.0" fill="#ff0000"/><rect x="355.5" y="271.0" width="2" height="15.0" fill="#3cb371"/><rect x="354.5" y="274.0" width="4" height="6.0" fill="#fff" stroke="#3cb371" stroke-width="2"/><rect x="360.5" y="272.0" width="2" height="5.0" fill="#ff0000"/><rect x="358.5" y="272.0" width="5" height="3.0" fill="#ff0000"/><rect x="367.5" y="274.0" width="2" height="7.0" fill="#ff0000"/><rect x="365.5" y="275.0" width="5" height="6.0" fill="#ff0000"/><rect x="371.5" y="277.0" width="2" height="8.0" fill="#ff0000"/><rect x="369.5" y="277.0" width="5" height="6.0" fill="#ff0000"/><rect x="377.5" y="283.0" width="2" height="5.0" fill="#ff0000"/><rect x="375.5" y="283.0" width="5" height="4.0" fill="#ff0000"/><rect x="382.5" y="281.5" width="2" height="8.0" fill="#ff0000"/><rect x="380.5" y="286.5" width="5" height="3.0" fill="#ff0000"/><rect x="387.5" y="287.0" width="2" height="8.0" fill="#3cb371"/><rect x="386.5" y="290.0" width="4" height="2.0" fill="#fff" stroke="#3cb371" stroke-width="2"/><rect x="391.5" y="286.0" width="2" height="5.0" fill="#3cb371"/><rect x="390.5" y="287.0" width="4" height="1.0" fill="#fff" stroke="#3cb371" stroke-width="2"/><rect x="397.5" y="284.0" width="2" height="14.0" fill="#ff0000"/><rect x="395.5" y="286.0" width="5" height="9.0" fill="#ff0000"/><rect x="402.5" y="294.0" width="2" height="17.0" fill="#ff0000"/><rect x="400.5" y="295.0" width="5" height="16.0" fill="#ff0000"/><rect x="407.5" y="308.0" width="2" height="15.0" fill="#3cb371"/><rect x="406.5" y="311.0" width="4" height="8.0" fill="#fff" stroke="#3cb371" stroke-width="2"/><rect x="413.5" y="309.0" width="2" height="13.0" fill="#ff0000"/><rect x="411.5" y="310.0" width="5" height="7.0" fill="#ff0000"/><rect x="418.5" y="316.0" width="2" height="10.0" fill="#ff0000"/><rect x="416.5" y="317.0" width="5" height="4.0" fill="#ff0000"/><rect x="424.5" y="319.0" width="2" height="25.0" fill="#ff0000"/><rect x="422.5" y="321.0" width="5" height="23.0" fill="#ff0000"/><rect x="429.5" y="344.0" width="2" height="17.0" fill="#ff0000"/><rect x="427.5" y="344.0" width="5" height="17.0" fill="#ff0000"/><rect x="435.5" y="342.0" width="2" height="19.0" fill="#3cb371"/><rect x="434.5" y="343.0" width="4" height="17.0" fill="#fff" stroke="#3cb371" stroke-width="2"/><rect x="440.5" y="335.0" width="2" height="12.0" fill="#3cb371"/><rect x="439.5" y="336.0" width="4" height="5.0" fill="#fff" stroke="#3cb371" stroke-width="2"/><rect x="445.5" y="333.5" width="2" height="5.0" fill="#3cb371"/><rect x="444.5" y="334.5" width="4" height="1.0" fill="#fff" stroke="#3cb371" stroke-width="2"/><rect x="450.5" y="331.0" width="2" height="9.0" fill="#ff0000"/><rect x="448.5" y="334.0" width="5" height="6.0" fill="#ff0000"/><rect x="456.5" y="339.0" width="2" height="30.0" fill="#ff0000"/><rect x="454.5" y="340.0" width="5" height="28.0" fill="#ff0000"/><rect x="461.5" y="368.0" width="2" height="42.0" fill="#ff0000"/><rect x="459.5" y="368.0" width="5" height="42.0" fill="#ff0000"/><rect x="466.5" y="408.0" width="2" height="47.0" fill="#ff0000"/><rect x="464.5" y="410.0" width="5" height="42.0" fill="#ff0000"/><rect x="472.5" y="451.0" width="2" height="43.0" fill="#ff0000"/><rect x="470.5" y="452.0" width="5" height="39.0" fill="#ff0000"/><rect x="477.5" y="489.0" width="2" height="7.0" fill="#3cb371"/><rect x="476.5" y="491.0" width="4" height="4.0" fill="#fff" stroke="#3cb371" stroke-width="2"/><rect x="483.5" y="484.0" width="2" height="14.0" fill="#ff0000"/><rect x="481.5" y="487.0" width="5" height="8.0" fill="#ff0000"/><rect x="487.5" y="480.0" width="2" height="26.0" fill="#ff0000"/><rect x="485.5" y="495.0" width="5" height="6.0" fill="#ff0000"/><rect x="493.5" y="482.0" width="2" height="35.0" fill="#3cb371"/><rect x="492.5" y="488.0" width="4" height="12.0" fill="#fff" stroke="#3cb371" stroke-width="2"/><rect x="499.5" y="485.0" width="2" height="37.0" fill="#ff0000"/><rect x="497.5" y="487.0" width="5" height="30.0" fill="#ff0000"/><rect x="504.5" y="510.0" width="2" height="15.0" fill="#3cb371"/><rect x="503.5" y="514.0" width="4" height="8.0" fill="#fff" stroke="#3cb371" stroke-width="2"/><rect x="509.5" y="511.0" width="2" height="24.0" fill="#ff0000"/><rect x="507.5" y="513.0" width="5" height="20.0" fill="#ff0000"/><rect x="514.5" y="532.0" width="2" height="6.0" fill="#3cb371"/><rect x="513.5" y="533.0" width="4" height="2.0" fill="#fff" stroke="#3cb371" stroke-width="2"/><rect x="520.5" y="525.0" width="2" height="10.0" fill="#ff0000"/><rect x="518.5" y="527.0" width="5" height="8.0" fill="#ff0000"/><rect x="527.5" y="528.0" width="2" height="7.0" fill="#3cb371"/><rect x="526.5" y="529.0" width="4" height="5.0" fill="#fff" stroke="#3cb371" stroke-width="2"/><rect x="531.5" y="526.0" width="2" height="5.0" fill="#ff0000"/><rect x="529.5" y="528.0" width="5" height="3.0" fill="#ff0000"/><rect x="536.5" y="526.0" width="2" height="25.0" fill="#ff0000"/><rect x="534.5" y="526.0" width="5" height="24.0" fill="#ff0000"/><rect x="541.5" y="546.0" width="2" height="6.0" fill="#ff0000"/><rect x="539.5" y="546.0" width="5" height="6.0" fill="#ff0000"/><rect x="546.5" y="552.0" width="2" height="21.0" fill="#ff0000"/><rect x="544.5" y="552.0" width="5" height="10.0" fill="#ff0000"/><rect x="552.5" y="554.0" width="2" height="18.0" fill="#3cb371"/><rect x="551.5" y="558.0" width="4" height="3.0" fill="#fff" stroke="#3cb371" stroke-width="2"/><rect x="557.5" y="556.0" width="2" height="17.0" fill="#ff0000"/><rect x="555.5" y="557.0" width="5" height="13.0" fill="#ff0000"/><rect x="562.5" y="557.0" width="2" height="21.0" fill="#ff0000"/><rect x="560.5" y="557.0" width="5" height="21.0" fill="#ff0000"/><rect x="567.5" y="566.0" width="2" height="15.0" fill="#3cb371"/><rect x="566.5" y="567.0" width="4" height="10.0" fill="#fff" stroke="#3cb371" stroke-width="2"/><rect x="572.5" y="562.0" width="2" height="9.0" fill="#3cb371"/><rect x="571.5" y="563.0" width="4" height="2.0" fill="#fff" stroke="#3cb371" stroke-width="2"/><rect x="578.5" y="550.0" width="2" height="13.0" fill="#3cb371"/><rect x="577.5" y="552.0" width="4" height="9.0" fill="#fff" stroke="#3cb371" stroke-width="2"/><rect x="583.5" y="524.0" width="2" height="28.0" fill="#3cb371"/><rect x="582.5" y="528.0" width="4" height="22.0" fill="#fff" stroke="#3cb371" stroke-width="2"/><rect x="589.5" y="497.0" width="2" height="30.0" fill="#3cb371"/><rect x="588.5" y="500.0" width="4" height="26.0" fill="#fff" stroke="#3cb371" stroke-width="2"/><rect x="594.5" y="494.5" width="2" height="7.0" fill="#3cb371"/><rect x="593.5" y="497.5" width="4" height="1.0" fill="#fff" stroke="#3cb371" stroke-width="2"/><rect x="599.5" y="481.0" width="2" height="18.0" fill="#3cb371"/><rect x="598.5" y="484.0" width="4" height="12.0" fill="#fff" stroke="#3cb371" stroke-width="2"/><rect x="604.5" y="473.0" width="2" height="10.0" fill="#3cb371"/><rect x="603.5" y="481.0" width="4" height="1.0" fill="#fff" stroke="#3cb371" stroke-width="2"/><rect x="610.5" y="480.0" width="2" height="19.0" fill="#ff0000"/><rect x="608.5" y="480.0" width="5" height="14.0" fill="#ff0000"/><rect x="615.5" y="484.0" width="2" height="11.0" fill="#3cb371"/><rect x="614.5" y="490.0" width="4" height="3.0" fill="#fff" stroke="#3cb371" stroke-width="2"/><rect x="620.5" y="487.0" width="2" height="20.0" fill="#ff0000"/><rect x="618.5" y="489.0" width="5" height="13.0" fill="#ff0000"/><rect x="626.5" y="495.0" width="2" height="10.0" fill="#3cb371"/><rect x="625.5" y="496.0" width="4" height="5.0" fill="#fff" stroke="#3cb371" stroke-width="2"/><rect x="631.5" y="492.0" width="2" height="6.0" fill="#3cb371"/><rect x="630.5" y="493.0" width="4" height="1.0" fill="#fff" stroke="#3cb371" stroke-width="2"/><rect x="636.5" y="491.0" width="2" height="8.0" fill="#3cb371"/><rect x="635.5" y="492.0" width="4" height="1.0" fill="#fff" stroke="#3cb371" stroke-width="2"/><rect x="642.5" y="482.0" width="2" height="9.0" fill="#3cb371"/><rect x="641.5" y="486.0" width="4" height="4.0" fill="#fff" stroke="#3cb371" stroke-width="2"/><rect x="647.5" y="476.0" width="2" height="10.0" fill="#3cb371"/><rect x="646.5" y="480.0" width="4" height="4.0" fill="#fff" stroke="#3cb371" stroke-width="2"/><rect x="652.5" y="475.0" width="2" height="13.0" fill="#3cb371"/><rect x="651.5" y="476.0" width="4" height="6.0" fill="#fff" stroke="#3cb371" stroke-width="2"/><rect x="658.5" y="444.0" width="2" height="35.0" fill="#3cb371"/><rect x="657.5" y="446.0" width="4" height="29.0" fill="#fff" stroke="#3cb371" stroke-width="2"/><rect x="663.5" y="430.0" width="2" height="15.0" fill="#3cb371"/><rect x="662.5" y="432.0" width="4" height="12.0" fill="#fff" stroke="#3cb371" stroke-width="2"/><rect x="668.5" y="421.0" width="2" height="10.0" fill="#3cb371"/><rect x="667.5" y="423.0" width="4" height="7.0" fill="#fff" stroke="#3cb371" stroke-width="2"/><rect x="673.5" y="419.0" width="2" height="20.0" fill="#ff0000"/><rect x="671.5" y="422.0" width="5" height="14.0" fill="#ff0000"/><rect x="678.5" y="426.0" width="2" height="14.0" fill="#ff0000"/><rect x="676.5" y="429.0" width="5" height="10.0" fill="#ff0000"/><rect x="684.5" y="434.0" width="2" height="23.0" fill="#ff0000"/><rect x="682.5" y="439.0" width="5" height="10.0" fill="#ff0000"/><rect x="689.5" y="447.0" width="2" height="6.0" fill="#3cb371"/><rect x="688.5" y="448.0" width="4" height="4.0" fill="#fff" stroke="#3cb371" stroke-width="2"/><rect x="695.5" y="439.0" width="2" height="13.0" fill="#3cb371"/><rect x="694.5" y="442.0" width="4" height="4.0" fill="#fff" stroke="#3cb371" stroke-width="2"/><rect x="699.5" y="434.0" width="2" height="10.0" fill="#ff0000"/><rect x="697.5" y="434.0" width="5" height="10.0" fill="#ff0000"/><rect x="705.5" y="434.0" width="2" height="12.0" fill="#3cb371"/><rect x="704.5" y="438.0" width="4" height="5.0" fill="#fff" stroke="#3cb371" stroke-width="2"/><rect x="710.5" y="428.0" width="2" height="14.0" fill="#3cb371"/><rect x="709.5" y="430.0" width="4" height="6.0" fill="#fff" stroke="#3cb371" stroke-width="2"/><rect x="716.5" y="418.0" width="2" height="11.0" fill="#3cb371"/><rect x="715.5" y="419.0" width="4" height="9.0" fill="#fff" stroke="#3cb371" stroke-width="2"/><rect x="721.5" y="404.0" width="2" height="16.0" fill="#3cb371"/><rect x="720.5" y="406.0" width="4" height="11.0" fill="#fff" stroke="#3cb371" stroke-width="2"/><rect x="726.5" y="386.0" width="2" height="19.0" fill="#3cb371"/><rect x="725.5" y="388.0" width="4" height="16.0" fill="#fff" stroke="#3cb371" stroke-width="2"/><rect x="731.5" y="373.0" width="2" height="20.0" fill="#3cb371"/><rect x="730.5" y="379.0" width="4" height="7.0" fill="#fff" stroke="#3cb371" stroke-width="2"/><rect x="736.5" y="376.0" width="2" height="16.0" fill="#ff0000"/><rect x="734.5" y="378.0" width="5" height="12.0" fill="#ff0000"/><rect x="742.5" y="376.0" width="2" height="15.0" fill="#3cb371"/><rect x="741.5" y="382.0" width="4" height="7.0" fill="#fff" stroke="#3cb371" stroke-width="2"/><rect x="748.5" y="379.0" width="2" height="3.0" fill="#3cb371"/><rect x="747.5" y="380.0" width="4" height="1.0" fill="#fff" stroke="#3cb371" stroke-width="2"/><rect x="754.5" y="377.0" width="2" height="5.0" fill="#3cb371"/><rect x="753.5" y="378.0" width="4" height="1.0" fill="#fff" stroke="#3cb371" stroke-width="2"/><rect x="759.5" y="375.5" width="2" height="4.0" fill="#3cb371"/><rect x="758.5" y="377.5" width="4" height="1.0" fill="#fff" stroke="#3cb371" stroke-width="2"/><rect x="764.5" y="374.0" width="2" height="11.0" fill="#ff0000"/><rect x="762.5" y="377.0" width="5" height="5.0" fill="#ff0000"/><rect x="769.5" y="382.0" width="2" height="15.0" fill="#ff0000"/><rect x="767.5" y="382.0" width="5" height="13.0" fill="#ff0000"/><rect x="774.5" y="376.0" width="2" height="20.0" fill="#3cb371"/><rect x="773.5" y="382.0" width="4" height="12.0" fill="#fff" stroke="#3cb371" stroke-width="2"/><rect x="780.5" y="376.0" width="2" height="15.0" fill="#3cb371"/><rect x="779.5" y="382.0" width="4" height="8.0" fill="#fff" stroke="#3cb371" stroke-width="2"/><rect x="785.5" y="370.0" width="2" height="15.0" fill="#ff0000"/><rect x="783.5" y="375.0" width="5" height="10.0" fill="#ff0000"/><rect x="789.5" y="378.0" width="2" height="9.0" fill="#3cb371"/><rect x="788.5" y="384.0" width="4" height="2.0" fill="#fff" stroke="#3cb371" stroke-width="2"/><rect x="794.5" y="381.0" width="2" height="25.0" fill="#ff0000"/><rect x="792.5" y="383.0" width="5" height="16.0" fill="#ff0000"/><rect x="800.5" y="390.0" width="2" height="10.0" fill="#3cb371"/><rect x="799.5" y="396.0" width="4" height="2.0" fill="#fff" stroke="#3cb371" stroke-width="2"/><rect x="806.5" y="389.0" width="2" height="10.0" fill="#ff0000"/><rect x="804.5" y="394.0" width="5" height="3.0" fill="#ff0000"/><rect x="810.5" y="393.0" width="2" height="11.0" fill="#ff0000"/><rect x="808.5" y="395.0" width="5" height="4.0" fill="#ff0000"/><rect x="816.5" y="394.0" width="2" height="9.0" fill="#ff0000"/><rect x="814.5" y="399.0" width="5" height="4.0" fill="#ff0000"/><rect x="821.5" y="403.0" width="2" height="4.0" fill="#ff0000"/><rect x="819.5" y="403.0" width="5" height="4.0" fill="#ff0000"/><rect x="825.5" y="404.0" width="2" height="8.0" fill="#ff0000"/><rect x="823.5" y="407.0" width="5" height="3.0" fill="#ff0000"/><rect x="832.5" y="405.0" width="2" height="15.0" fill="#3cb371"/><rect x="831.5" y="411.0" width="4" height="8.0" fill="#fff" stroke="#3cb371" stroke-width="2"/><rect x="837.5" y="406.0" width="2" height="11.0" fill="#3cb371"/><rect x="836.5" y="410.0" width="4" height="4.0" fill="#fff" stroke="#3cb371" stroke-width="2"/><rect x="843.5" y="398.0" width="2" height="12.0" fill="#3cb371"/><rect x="842.5" y="404.0" width="4" height="4.0" fill="#fff" stroke="#3cb371" stroke-width="2"/><rect x="848.5" y="398.5" width="2" height="9.0" fill="#3cb371"/><rect x="847.5" y="402.5" width="4" height="1.0" fill="#fff" stroke="#3cb371" stroke-width="2"/><rect x="854.5" y="402.0" width="2" height="14.0" fill="#ff0000"/><rect x="852.5" y="402.0" width="5" height="14.0" fill="#ff0000"/><rect x="859.5" y="407.0" width="2" height="14.0" fill="#3cb371"/><rect x="858.5" y="413.0" width="4" height="2.0" fill="#fff" stroke="#3cb371" stroke-width="2"/><rect x="864.5" y="412.0" width="2" height="15.0" fill="#ff0000"/><rect x="862.5" y="412.0" width="5" height="12.0" fill="#ff0000"/><rect x="870.5" y="423.0" width="2" height="10.0" fill="#3cb371"/><rect x="869.5" y="424.0" width="4" height="6.0" fill="#fff" stroke="#3cb371" stroke-width="2"/><rect x="875.5" y="420.0" width="2" height="20.0" fill="#ff0000"/><rect x="873.5" y="423.0" width="5" height="13.0" fill="#ff0000"/><rect x="880.5" y="430.0" width="2" height="6.0" fill="#3cb371"/><rect x="879.5" y="432.0" width="4" height="3.0" fill="#fff" stroke="#3cb371" stroke-width="2"/><rect x="886.5" y="423.0" width="2" height="11.0" fill="#3cb371"/><rect x="885.5" y="425.0" width="4" height="5.0" fill="#fff" stroke="#3cb371" stroke-width="2"/><rect x="891.5" y="420.5" width="2" height="7.0" fill="#ff0000"/><rect x="889.5" y="423.5" width="5" height="3.0" fill="#ff0000"/><rect x="896.5" y="420.0" width="2" height="8.0" fill="#3cb371"/><rect x="895.5" y="424.0" width="4" height="1.0" fill="#fff" stroke="#3cb371" stroke-width="2"/><rect x="901.5" y="423.0" width="2" height="8.0" fill="#ff0000"/><rect x="899.5" y="423.0" width="5" height="8.0" fill="#ff0000"/><rect x="907.5" y="427.0" width="2" height="11.0" fill="#3cb371"/><rect x="906.5" y="429.0" width="4" height="6.0" fill="#fff" stroke="#3cb371" stroke-width="2"/><rect x="912.5" y="424.0" width="2" height="14.0" fill="#3cb371"/><rect x="911.5" y="428.0" width="4" height="6.0" fill="#fff" stroke="#3cb371" stroke-width="2"/><rect x="917.5" y="422.0" width="2" height="7.0" fill="#3cb371"/><rect x="916.5" y="426.0" width="4" height="2.0" fill="#fff" stroke="#3cb371" stroke-width="2"/><rect x="923.5" y="422.0" width="2" height="10.0" fill="#ff0000"/><rect x="921.5" y="425.0" width="5" height="7.0" fill="#ff0000"/><rect x="928.5" y="427.0" width="2" height="9.0" fill="#3cb371"/><rect x="927.5" y="431.0" width="4" height="4.0" fill="#fff" stroke="#3cb371" stroke-width="2"/><rect x="933.5" y="420.0" width="2" height="12.0" fill="#ff0000"/><rect x="931.5" y="422.0" width="5" height="10.0" fill="#ff0000"/><rect x="939.5" y="430.0" width="2" height="6.0" fill="#3cb371"/><rect x="938.5" y="431.0" width="4" height="4.0" fill="#fff" stroke="#3cb371" stroke-width="2"/><rect x="944.5" y="415.0" width="2" height="15.0" fill="#3cb371"/><rect x="943.5" y="416.0" width="4" height="13.0" fill="#fff" stroke="#3cb371" stroke-width="2"/><rect x="949.5" y="413.0" width="2" height="21.0" fill="#ff0000"/><rect x="947.5" y="415.0" width="5" height="16.0" fill="#ff0000"/><rect x="954.5" y="399.0" width="2" height="32.0" fill="#3cb371"/><rect x="953.5" y="405.0" width="4" height="25.0" fill="#fff" stroke="#3cb371" stroke-width="2"/><rect x="960.5" y="402.0" width="2" height="28.0" fill="#ff0000"/><rect x="958.5" y="402.0" width="5" height="6.0" fill="#ff0000"/><rect x="965.5" y="402.0" width="2" height="14.0" fill="#3cb371"/><rect x="964.5" y="406.0" width="4" height="6.0" fill="#fff" stroke="#3cb371" stroke-width="2"/><rect x="970.5" y="402.0" width="2" height="8.0" fill="#3cb371"/><rect x="969.5" y="405.0" width="4" height="4.0" fill="#fff" stroke="#3cb371" stroke-width="2"/><rect x="975.5" y="400.0" width="2" height="6.0" fill="#3cb371"/><rect x="974.5" y="401.0" width="4" height="4.0" fill="#fff" stroke="#3cb371" stroke-width="2"/><rect x="977.5" y="397.5" width="2" height="4.0" fill="#ff0000"/><rect x="975.5" y="398.5" width="5" height="3.0" fill="#ff0000"/><rect x="982.5" y="397.0" width="2" height="13.0" fill="#3cb371"/><rect x="981.5" y="398.0" width="4" height="8.0" fill="#fff" stroke="#3cb371" stroke-width="2"/><rect x="987.5" y="392.0" width="2" height="7.0" fill="#3cb371"/><rect x="986.5" y="396.0" width="4" height="2.0" fill="#fff" stroke="#3cb371" stroke-width="2"/><rect x="992.5" y="393.0" width="2" height="10.0" fill="#3cb371"/><rect x="991.5" y="394.0" width="4" height="6.0" fill="#fff" stroke="#3cb371" stroke-width="2"/><rect x="997.5" y="389.0" width="2" height="11.0" fill="#ff0000"/><rect x="995.5" y="392.0" width="5" height="5.0" fill="#ff0000"/><rect x="1002.5" y="394.0" width="2" height="9.0" fill="#3cb371"/><rect x="1001.5" y="398.0" width="4" height="4.0" fill="#fff" stroke="#3cb371" stroke-width="2"/><rect x="1007.5" y="384.0" width="2" height="17.0" fill="#3cb371"/><rect x="1006.5" y="390.0" width="4" height="9.0" fill="#fff" stroke="#3cb371" stroke-width="2"/><rect x="1013.5" y="383.0" width="2" height="18.0" fill="#3cb371"/><rect x="1012.5" y="386.0" width="4" height="11.0" fill="#fff" stroke="#3cb371" stroke-width="2"/><rect x="1018.5" y="382.0" width="2" height="11.0" fill="#ff0000"/><rect x="1016.5" y="384.0" width="5" height="6.0" fill="#ff0000"/><rect x="1023.5" y="380.0" width="2" height="13.0" fill="#ff0000"/><rect x="1021.5" y="385.0" width="5" height="5.0" fill="#ff0000"/><rect x="1028.5" y="386.0" width="2" height="6.0" fill="#3cb371"/><rect x="1027.5" y="390.0" width="4" height="1.0" fill="#fff" stroke="#3cb371" stroke-width="2"/><rect x="1034.5" y="385.0" width="2" height="12.0" fill="#3cb371"/><rect x="1033.5" y="388.0" width="4" height="8.0" fill="#fff" stroke="#3cb371" stroke-width="2"/><rect x="1039.5" y="386.0" width="2" height="6.0" fill="#3cb371"/><rect x="1038.5" y="387.0" width="4" height="2.0" fill="#fff" stroke="#3cb371" stroke-width="2"/><rect x="1045.5" y="383.0" width="2" height="5.0" fill="#3cb371"/><rect x="1044.5" y="385.0" width="4" height="2.0" fill="#fff" stroke="#3cb371" stroke-width="2"/><rect x="1050.5" y="383.0" width="2" height="10.0" fill="#3cb371"/><rect x="1049.5" y="384.0" width="4" height="6.0" fill="#fff" stroke="#3cb371" stroke-width="2"/><rect x="1055.5" y="380.5" width="2" height="8.0" fill="#3cb371"/><rect x="1054.5" y="381.5" width="4" height="1.0" fill="#fff" stroke="#3cb371" stroke-width="2"/><rect x="1061.5" y="381.0" width="2" height="3.0" fill="#3cb371"/><rect x="1060.5" y="382.0" width="4" height="1.0" fill="#fff" stroke="#3cb371" stroke-width="2"/><rect x="1066.5" y="375.5" width="2" height="13.0" fill="#ff0000"/><rect x="1064.5" y="380.5" width="5" height="3.0" fill="#ff0000"/><rect x="1071.5" y="380.0" width="2" height="9.0" fill="#3cb371"/><rect x="1070.5" y="382.0" width="4" height="6.0" fill="#fff" stroke="#3cb371" stroke-width="2"/><rect x="1076.5" y="380.0" width="2" height="5.0" fill="#3cb371"/><rect x="1075.5" y="381.0" width="4" height="1.0" fill="#fff" stroke="#3cb371" stroke-width="2"/><rect x="1081.5" y="372.5" width="2" height="8.0" fill="#3cb371"/><rect x="1080.5" y="378.5" width="4" height="1.0" fill="#fff" stroke="#3cb371" stroke-width="2"/><rect x="1086.5" y="374.0" width="2" height="6.0" fill="#3cb371"/><rect x="1085.5" y="377.0" width="4" height="2.0" fill="#fff" stroke="#3cb371" stroke-width="2"/><rect x="1091.5" y="375.0" width="2" height="8.0" fill="#3cb371"/><rect x="1090.5" y="376.0" width="4" height="6.0" fill="#fff" stroke="#3cb371" stroke-width="2"/><rect x="1096.5" y="371.0" width="2" height="13.0" fill="#3cb371"/><rect x="1095.5" y="374.0" width="4" height="6.0" fill="#fff" stroke="#3cb371" stroke-width="2"/><rect x="1101.5" y="369.0" width="2" height="7.0" fill="#3cb371"/><rect x="1100.5" y="371.0" width="4" height="2.0" fill="#fff" stroke="#3cb371" stroke-width="2"/><rect x="1106.5" y="370.0" width="2" height="7.0" fill="#ff0000"/><rect x="1104.5" y="370.0" width="5" height="6.0" fill="#ff0000"/><rect x="1112.5" y="374.0" width="2" height="8.0" fill="#ff0000"/><rect x="1110.5" y="374.0" width="5" height="3.0" fill="#ff0000"/><rect x="1117.5" y="373.0" width="2" height="5.0" fill="#3cb371"/><rect x="1116.5" y="374.0" width="4" height="2.0" fill="#fff" stroke="#3cb371" stroke-width="2"/><rect x="1122.5" y="369.0" width="2" height="10.0" fill="#3cb371"/><rect x="1121.5" y="372.0" width="4" height="4.0" fill="#fff" stroke="#3cb371" stroke-width="2"/><rect x="1127.5" y="370.0" width="2" height="10.0" fill="#3cb371"/><rect x="1126.5" y="371.0" width="4" height="6.0" fill="#fff" stroke="#3cb371" stroke-width="2"/><rect x="1133.5" y="366.0" width="2" height="9.0" fill="#3cb371"/><rect x="1132.5" y="370.0" width="4" height="1.0" fill="#fff" stroke="#3cb371" stroke-width="2"/><rect x="1138.5" y="365.0" width="2" height="6.0" fill="#ff0000"/><rect x="1136.5" y="368.0" width="5" height="3.0" fill="#ff0000"/><rect x="1143.5" y="369.0" width="2" height="3.0" fill="#3cb371"/><rect x="1142.5" y="370.0" width="4" height="1.0" fill="#fff" stroke="#3cb371" stroke-width="2"/><rect x="1148.5" y="366.5" width="2" height="5.0" fill="#3cb371"/><rect x="1147.5" y="368.5" width="4" height="1.0" fill="#fff" stroke="#3cb371" stroke-width="2"/><rect x="1154.5" y="368.0" width="2" height="5.0" fill="#ff0000"/><rect x="1152.5" y="368.0" width="5" height="4.0" fill="#ff0000"/><rect x="1159.5" y="370.0" width="2" height="12.0" fill="#3cb371"/><rect x="1158.5" y="371.0" width="4" height="8.0" fill="#fff" stroke="#3cb371" stroke-width="2"/><rect x="1167.5" y="358.0" width="2" height="13.0" fill="#3cb371"/><rect x="1166.5" y="364.0" width="4" height="5.0" fill="#fff" stroke="#3cb371" stroke-width="2"/><rect x="1172.5" y="352.0" width="2" height="11.0" fill="#3cb371"/><rect x="1171.5" y="355.0" width="4" height="7.0" fill="#fff" stroke="#3cb371" stroke-width="2"/><rect x="1177.5" y="337.0" width="2" height="20.0" fill="#3cb371"/><rect x="1176.5" y="341.0" width="4" height="12.0" fill="#fff" stroke="#3cb371" stroke-width="2"/><rect x="1182.5" y="329.0" width="2" height="13.0" fill="#3cb371"/><rect x="1181.5" y="333.0" width="4" height="6.0" fill="#fff" stroke="#3cb371" stroke-width="2"/><rect x="1188.5" y="326.0" width="2" height="9.0" fill="#3cb371"/><rect x="1187.5" y="328.0" width="4" height="6.0" fill="#fff" stroke="#3cb371" stroke-width="2"/><rect x="1193.5" y="317.0" width="2" height="10.0" fill="#3cb371"/><rect x="1192.5" y="319.0" width="4" height="7.0" fill="#fff" stroke="#3cb371" stroke-width="2"/><rect x="1199.5" y="307.0" width="2" height="11.0" fill="#3cb371"/><rect x="1198.5" y="313.0" width="4" height="4.0" fill="#fff" stroke="#3cb371" stroke-width="2"/><rect x="1204.5" y="286.0" width="2" height="26.0" fill="#3cb371"/><rect x="1203.5" y="289.0" width="4" height="22.0" fill="#fff" stroke="#3cb371" stroke-width="2"/><rect x="1210.5" y="229.0" width="2" height="59.0" fill="#3cb371"/><rect x="1209.5" y="231.0" width="4" height="56.0" fill="#fff" stroke="#3cb371" stroke-width="2"/><rect x="1215.5" y="220.0" width="2" height="23.0" fill="#ff0000"/><rect x="1213.5" y="230.0" width="5" height="13.0" fill="#ff0000"/><rect x="1220.5" y="236.0" width="2" height="11.0" fill="#ff0000"/><rect x="1218.5" y="237.0" width="5" height="10.0" fill="#ff0000"/><rect x="1224.5" y="240.0" width="2" height="10.0" fill="#ff0000"/><rect x="1222.5" y="244.0" width="5" height="6.0" fill="#ff0000"/><rect x="1229.5" y="250.0" width="2" height="10.0" fill="#ff0000"/><rect x="1227.5" y="250.0" width="5" height="5.0" fill="#ff0000"/><rect x="1234.5" y="253.0" width="2" height="4.0" fill="#3cb371"/><rect x="1233.5" y="254.0" width="4" height="1.0" fill="#fff" stroke="#3cb371" stroke-width="2"/><rect x="1239.5" y="249.0" width="2" height="8.0" fill="#3cb371"/><rect x="1238.5" y="253.0" width="4" height="1.0" fill="#fff" stroke="#3cb371" stroke-width="2"/><rect x="1243.5" y="250.5" width="2" height="7.0" fill="#3cb371"/><rect x="1242.5" y="252.5" width="4" height="1.0" fill="#fff" stroke="#3cb371" stroke-width="2"/><rect x="1247.5" y="252.5" width="2" height="3.0" fill="#ff0000"/><rect x="1245.5" y="252.5" width="5" height="3.0" fill="#ff0000"/><path d="M78.0,306.4 C82.1,305.8 96.0,303.5 102.5,302.5 C109.0,301.5 112.7,300.3 117.0,300.5 C121.3,300.7 122.0,303.1 128.5,303.8 C135.0,304.5 147.1,304.4 156.0,304.5 C164.9,304.6 174.2,304.2 182.0,304.5 C189.8,304.8 197.8,306.1 203.0,306.4 C208.2,306.7 210.4,307.3 213.4,306.4 C216.4,305.5 218.8,302.9 221.0,301.0 C223.2,299.1 224.4,301.6 226.4,294.7 C228.4,287.8 231.1,269.3 233.0,259.5 C234.9,249.7 235.7,243.9 238.0,236.0 C240.3,228.1 243.9,220.1 246.8,212.2 C249.7,204.3 252.7,195.3 255.6,188.7 C258.5,182.1 261.5,177.7 264.4,172.6 C267.3,167.5 270.3,162.1 273.2,157.9 C276.1,153.7 279.5,149.8 282.0,147.6 C284.5,145.3 285.6,144.9 288.0,144.4 C290.4,143.9 293.3,143.7 296.7,144.7 C300.1,145.7 305.1,147.7 308.5,150.6 C311.9,153.5 314.4,157.7 317.3,162.3 C320.2,167.0 324.0,174.8 326.1,178.5 C328.2,182.2 328.0,184.3 330.2,184.3 C332.4,184.3 336.1,179.8 339.3,178.5 C342.5,177.2 345.7,177.1 349.6,176.3 C353.5,175.6 359.4,173.9 362.8,174.0 C366.2,174.1 367.5,175.5 370.2,177.0 C372.9,178.5 376.6,181.2 379.0,182.9 C381.4,184.6 382.4,184.6 384.8,187.3 C387.2,190.0 390.5,194.6 393.7,199.0 C396.9,203.4 400.6,209.0 404.0,213.7 C407.4,218.3 411.3,223.0 414.2,226.9 C417.1,230.8 419.4,235.2 421.6,237.2 C423.8,239.2 425.7,238.7 427.4,238.7 C429.1,238.7 429.9,236.5 431.8,237.2 C433.7,237.8 435.4,240.1 438.8,242.6 C442.2,245.1 448.9,250.5 452.0,252.1 C455.1,253.7 454.8,254.2 457.2,252.1 C459.6,250.0 463.9,244.1 466.7,239.6 C469.5,235.1 471.3,228.1 474.0,225.0 C476.7,221.9 480.2,221.6 482.9,221.3 C485.6,221.1 487.3,220.9 490.2,223.5 C493.1,226.1 497.3,232.3 500.5,236.7 C503.7,241.1 505.9,243.5 509.3,249.9 C512.7,256.3 518.0,267.5 521.0,274.9 C524.0,282.2 524.5,287.8 527.0,294.0 C529.5,300.2 533.7,308.3 535.7,312.0 C537.7,315.7 537.7,310.9 539.2,316.2 C540.8,321.5 542.8,334.0 545.0,344.0 C547.2,354.0 550.2,365.1 552.4,376.4 C554.6,387.7 556.7,402.7 558.3,412.0 C559.9,421.3 560.6,424.5 562.2,432.3 C563.8,440.1 565.6,451.6 568.0,458.7 C570.4,465.8 573.8,470.2 576.8,474.9 C579.8,479.5 582.8,484.2 585.7,486.6 C588.7,489.1 591.6,489.8 594.5,489.6 C597.4,489.4 600.1,487.4 603.3,485.2 C606.5,483.0 609.1,480.1 613.6,476.4 C618.1,472.7 624.9,466.9 630.0,463.1 C635.1,459.3 639.7,456.8 644.0,453.8 C648.3,450.8 652.6,448.7 655.8,445.0 C659.0,441.3 661.4,435.0 663.1,431.7 C664.8,428.4 664.1,427.4 666.1,425.4 C668.1,423.4 671.2,420.3 674.9,419.6 C678.6,418.9 683.5,422.0 688.1,421.0 C692.8,420.0 697.9,416.6 702.8,413.7 C707.7,410.8 713.8,406.6 717.5,403.4 C721.2,400.2 722.8,397.5 724.8,394.6 C726.8,391.7 726.8,388.7 729.2,385.8 C731.7,382.9 735.3,380.4 739.5,377.0 C743.7,373.6 749.3,368.4 754.2,365.2 C759.1,362.0 764.0,360.0 768.9,357.9 C773.8,355.8 779.7,353.8 783.6,352.8 C787.5,351.8 789.3,351.1 792.4,352.0 C795.5,352.9 798.7,355.7 802.0,357.9 C805.3,360.1 808.9,362.6 812.3,365.2 C815.7,367.8 819.4,372.1 822.6,373.3 C825.8,374.5 827.5,372.7 831.4,372.6 C835.3,372.5 841.2,371.9 846.1,372.6 C851.0,373.3 856.6,375.9 860.8,377.0 C864.9,378.1 868.3,379.1 871.0,379.2 C873.7,379.2 874.4,377.1 876.9,377.3 C879.4,377.6 882.3,378.8 885.7,380.7 C889.1,382.6 893.1,386.6 897.5,388.7 C901.9,390.8 907.3,391.4 912.2,393.1 C917.1,394.8 921.9,397.0 926.8,399.0 C931.7,401.0 937.1,403.3 941.5,404.9 C945.9,406.5 949.4,408.5 953.3,408.6 C957.2,408.7 960.5,407.0 965.0,405.6 C969.5,404.2 975.9,402.6 980.0,400.5 C984.1,398.4 985.4,395.4 989.4,393.1 C993.4,390.8 999.2,388.9 1004.1,386.5 C1009.0,384.1 1013.8,380.3 1018.7,378.5 C1023.6,376.7 1029.9,375.9 1033.4,375.5 C1037.0,375.1 1036.3,376.1 1040.0,376.4 C1043.7,376.7 1048.1,378.1 1055.5,377.5 C1062.9,376.9 1075.8,374.3 1084.3,373.0 C1092.8,371.7 1099.0,370.8 1106.4,369.7 C1113.8,368.6 1119.7,367.0 1128.5,366.4 C1137.3,365.8 1152.8,366.7 1159.5,366.0 C1166.2,365.3 1165.5,364.5 1168.4,362.0 C1171.4,359.5 1173.5,355.7 1177.2,350.9 C1180.9,346.1 1186.1,340.6 1190.5,333.2 C1194.9,325.8 1200.1,317.8 1203.8,306.6 C1207.5,295.4 1209.8,276.8 1212.8,266.1 C1215.8,255.4 1219.1,248.7 1221.6,242.6 C1224.0,236.5 1225.3,233.8 1227.5,229.4 C1229.7,225.0 1231.6,220.4 1234.8,216.2 C1238.0,212.0 1244.6,206.4 1246.6,204.4" fill="none" stroke="#ff0000" stroke-width="1.2" stroke-linejoin="round" stroke-linecap="round"/><path d="M78.0,353.6 C80.5,353.2 88.6,352.2 92.7,351.4 C96.8,350.5 99.0,349.7 102.7,348.5 C106.4,347.3 110.7,346.2 114.7,344.0 C118.7,341.8 122.8,337.2 126.5,335.3 C130.2,333.4 133.3,332.3 136.7,332.3 C140.1,332.3 143.3,334.6 147.0,335.3 C150.7,336.0 154.4,336.2 158.8,336.7 C163.2,337.2 169.8,337.5 173.5,338.2 C177.2,338.9 178.1,339.4 180.8,341.0 C183.5,342.6 187.2,346.6 189.6,347.8 C192.0,349.1 192.6,348.6 195.5,348.5 C198.4,348.4 203.5,347.1 207.2,347.3 C210.9,347.6 214.6,348.8 217.5,350.0 C220.4,351.2 222.1,349.3 224.8,354.4 C227.5,359.5 231.2,375.2 233.7,380.8 C236.1,386.4 236.8,385.6 239.5,388.0 C242.2,390.4 246.1,394.9 249.8,395.5 C253.5,396.1 257.8,393.1 261.5,391.8 C265.2,390.6 269.1,389.6 271.8,388.0 C274.6,386.4 275.3,386.6 278.0,382.3 C280.7,378.0 284.9,368.7 288.0,362.0 C291.1,355.3 294.0,349.3 296.7,342.0 C299.4,334.7 301.6,325.8 304.0,318.1 C306.4,310.4 308.9,302.9 311.4,296.0 C313.9,289.1 316.4,283.4 318.8,277.0 C321.2,270.6 323.9,262.8 326.1,257.9 C328.3,253.0 329.6,246.9 332.0,247.6 C334.4,248.3 336.9,256.2 340.8,262.3 C344.7,268.4 350.6,278.2 355.5,284.3 C360.4,290.4 365.3,294.6 370.2,299.0 C375.1,303.4 379.9,308.1 384.8,310.8 C389.7,313.5 394.6,313.5 399.5,315.2 C404.4,316.9 410.3,319.3 414.2,321.0 C418.1,322.7 419.8,320.6 423.0,325.4 C426.2,330.2 430.3,344.9 433.5,350.0 C436.7,355.1 438.9,353.9 442.3,355.8 C445.7,357.8 451.3,358.3 454.0,361.7 C456.7,365.1 456.7,370.0 458.5,376.4 C460.3,382.8 462.4,389.2 465.0,400.0 C467.6,410.8 471.3,427.3 474.0,441.0 C476.7,454.7 478.8,471.3 481.0,482.0 C483.2,492.7 485.2,498.3 487.0,505.0 C488.8,511.7 489.0,513.5 491.7,522.0 C494.4,530.5 500.0,546.3 503.4,555.8 C506.8,565.3 509.4,573.2 511.8,579.0 C514.2,584.8 515.4,587.1 517.6,590.8 C519.8,594.5 522.3,597.7 525.0,601.1 C527.7,604.5 531.1,608.3 533.8,611.4 C536.5,614.5 538.9,618.0 541.1,619.5 C543.3,621.0 545.0,620.7 547.0,620.2 C549.0,619.7 550.9,619.0 552.9,616.5 C554.9,614.0 557.1,608.9 558.8,605.5 C560.5,602.1 561.2,598.8 563.2,596.0 C565.2,593.2 568.0,590.1 570.5,588.6 C573.0,587.1 575.4,587.7 577.9,587.2 C580.4,586.7 582.0,586.0 585.2,585.7 C588.4,585.5 593.6,585.1 597.0,585.7 C600.4,586.3 602.9,588.5 605.8,589.4 C608.7,590.3 611.4,590.9 614.6,591.1 C617.8,591.3 621.1,590.5 624.8,590.4 C628.5,590.3 632.9,591.1 636.6,590.4 C640.3,589.7 644.0,588.0 646.9,586.4 C649.8,584.8 651.3,582.5 654.2,580.6 C657.1,578.7 662.0,576.9 664.5,574.7 C667.0,572.5 667.4,569.8 668.9,567.3 C670.4,564.8 670.3,565.9 673.3,560.0 C676.2,554.1 682.9,538.7 686.6,532.0 C690.3,525.3 691.5,522.9 695.4,519.9 C699.3,516.9 705.2,516.2 710.1,514.0 C715.0,511.8 720.6,508.8 724.8,506.6 C729.0,504.4 731.4,504.0 735.1,500.8 C738.8,497.6 742.9,492.6 746.8,487.5 C750.7,482.4 754.9,473.3 758.6,469.9 C762.3,466.5 764.7,468.5 768.9,467.0 C773.1,465.5 779.9,464.0 783.6,461.1 C787.3,458.2 788.2,453.4 790.9,449.4 C793.6,445.4 797.6,440.5 800.0,437.1 C802.4,433.7 803.5,432.1 805.2,429.0 C806.9,425.9 808.6,421.4 810.3,418.7 C812.0,416.0 813.8,414.2 815.5,412.6 C817.2,411.0 817.4,408.6 820.6,409.2 C823.9,409.8 830.1,413.9 835.0,416.0 C839.9,418.1 845.0,420.0 850.0,422.0 C855.0,424.0 860.2,426.0 865.0,428.0 C869.8,430.0 874.5,432.5 879.0,434.1 C883.5,435.7 886.6,436.6 891.8,437.6 C897.0,438.7 904.0,439.8 910.1,440.4 C916.2,441.0 922.4,441.4 928.5,441.3 C934.6,441.2 942.2,439.9 946.8,439.5 C951.4,439.1 952.9,438.6 956.0,438.9 C959.1,439.2 960.6,440.9 965.2,441.3 C969.8,441.7 977.5,441.6 983.6,441.3 C989.7,441.0 995.8,440.7 1001.9,439.5 C1008.0,438.3 1015.0,435.9 1020.3,434.0 C1025.5,432.1 1030.1,430.3 1033.4,428.4 C1036.7,426.5 1035.2,426.1 1040.0,422.8 C1044.8,419.5 1054.7,412.4 1062.1,408.5 C1069.5,404.6 1076.9,402.2 1084.3,399.6 C1091.7,397.0 1099.0,394.5 1106.4,393.0 C1113.8,391.5 1121.1,392.0 1128.5,390.7 C1135.9,389.4 1144.8,386.4 1150.7,385.2 C1156.6,384.0 1160.3,383.7 1164.0,383.7 C1167.7,383.7 1168.4,383.6 1172.8,385.2 C1177.2,386.8 1185.3,390.2 1190.5,393.0 C1195.7,395.8 1200.5,398.1 1203.8,401.8 C1207.1,405.5 1208.2,410.9 1210.4,415.0 C1212.6,419.1 1214.8,424.1 1217.0,426.2 C1219.2,428.2 1220.7,428.2 1223.7,427.3 C1226.7,426.4 1230.9,423.7 1234.8,420.6 C1238.7,417.5 1245.0,410.5 1247.0,408.5" fill="none" stroke="#ff0000" stroke-width="1.2" stroke-linejoin="round" stroke-linecap="round"/><path d="M78.0,296.3 C81.9,297.2 94.9,300.7 101.4,301.7 C107.9,302.7 112.6,301.9 117.0,302.5 C121.4,303.1 121.5,304.3 128.0,305.6 C134.5,306.9 147.7,309.1 156.0,310.3 C164.3,311.5 171.5,311.9 178.0,312.7 C184.5,313.5 190.0,314.6 195.0,315.0 C200.0,315.4 203.7,315.3 208.0,315.3 C212.3,315.3 216.0,315.4 221.0,314.9 C226.0,314.4 231.5,313.2 238.0,312.2 C244.5,311.1 252.7,309.8 260.0,308.6 C267.3,307.4 274.7,306.0 282.0,304.9 C289.3,303.8 296.7,302.7 304.0,301.7 C311.3,300.7 318.7,299.6 326.0,299.0 C333.3,298.4 340.7,298.1 348.0,297.8 C355.3,297.5 362.7,297.4 370.0,297.3 C377.3,297.2 384.7,297.3 392.0,297.5 C399.3,297.7 406.3,298.0 414.0,298.3 C421.7,298.6 430.7,299.3 438.0,299.5 C445.3,299.7 453.0,299.3 458.0,299.6 C463.0,299.9 464.8,300.4 468.0,301.3 C471.2,302.2 473.2,303.8 477.0,305.0 C480.8,306.2 485.0,306.8 491.0,308.7 C497.0,310.6 505.7,313.5 513.0,316.2 C520.3,318.9 527.7,322.3 535.0,325.0 C542.3,327.7 550.9,329.9 557.0,332.3 C563.1,334.7 566.7,337.4 571.5,339.6 C576.3,341.8 581.2,343.8 586.0,345.5 C590.8,347.2 595.2,348.4 600.0,349.8 C604.8,351.2 609.8,352.4 614.7,354.2 C619.6,356.0 624.5,359.0 629.4,360.8 C634.3,362.6 639.1,363.7 644.0,365.2 C648.9,366.7 653.8,368.4 658.7,369.6 C663.6,370.8 668.5,371.6 673.4,372.6 C678.3,373.6 683.2,374.4 688.1,375.5 C693.0,376.6 697.9,378.3 702.8,379.2 C707.7,380.1 712.6,380.5 717.5,381.1 C722.4,381.7 727.3,382.2 732.2,382.9 C737.1,383.6 741.9,384.2 746.8,385.1 C751.7,386.0 756.6,386.7 761.5,388.0 C766.4,389.3 771.3,391.4 776.2,393.1 C781.1,394.8 785.4,396.5 790.9,398.3 C796.4,400.1 803.6,402.4 809.4,404.2 C815.2,405.9 820.9,407.2 825.8,408.8 C830.7,410.4 834.1,412.1 838.7,413.7 C843.3,415.2 847.6,416.4 853.4,418.1 C859.2,419.8 867.0,421.7 873.4,423.9 C879.8,426.1 885.7,428.9 891.8,431.2 C897.9,433.5 904.0,435.8 910.1,437.6 C916.2,439.4 922.4,441.0 928.5,442.2 C934.6,443.4 940.7,444.1 946.8,445.0 C952.9,445.9 959.1,447.1 965.2,447.7 C971.3,448.3 979.0,448.5 983.6,448.6 C988.2,448.8 989.7,448.9 992.7,448.6 C995.8,448.3 997.3,447.7 1001.9,446.8 C1006.5,445.9 1013.9,444.3 1020.3,443.1 C1026.6,441.9 1031.2,441.8 1040.0,439.4 C1048.8,436.9 1062.1,432.1 1073.2,428.4 C1084.3,424.7 1095.3,420.8 1106.4,417.3 C1117.5,413.8 1128.5,410.2 1139.6,407.3 C1150.7,404.4 1161.7,402.4 1172.8,399.6 C1183.9,396.8 1193.5,394.1 1206.0,390.7 C1218.5,387.3 1241.0,381.1 1248.0,379.2" fill="none" stroke="#ff0000" stroke-width="3.1" stroke-linejoin="round" stroke-linecap="round"/><path d="M78.0,319.4 C82.1,319.7 96.0,321.0 102.5,321.4 C109.0,321.8 112.4,321.5 117.0,322.0 C121.6,322.5 123.5,323.6 130.0,324.6 C136.5,325.6 147.3,327.2 156.0,328.0 C164.7,328.8 173.3,329.1 182.0,329.2 C190.7,329.3 201.5,328.9 208.0,328.5 C214.5,328.1 216.0,328.0 221.0,326.6 C226.0,325.2 232.7,322.7 238.0,320.3 C243.3,317.9 247.8,314.6 252.7,312.2 C257.6,309.8 262.5,308.1 267.4,305.6 C272.3,303.2 277.1,299.9 282.0,297.5 C286.9,295.1 291.8,292.9 296.7,291.0 C301.6,289.1 306.5,287.5 311.4,285.8 C316.3,284.1 321.2,282.1 326.1,280.7 C331.0,279.3 335.9,278.6 340.8,277.7 C345.7,276.8 350.6,276.4 355.5,275.5 C360.4,274.6 365.3,273.4 370.2,272.6 C375.1,271.8 379.9,271.3 384.8,270.8 C389.7,270.3 394.6,269.8 399.5,269.4 C404.4,269.0 409.1,268.7 414.2,268.6 C419.3,268.5 423.4,268.9 430.0,269.0 C436.6,269.1 447.9,268.5 453.5,269.0 C459.1,269.5 460.4,270.4 463.8,272.0 C467.2,273.6 470.6,276.4 474.0,278.6 C477.4,280.8 481.1,282.6 484.3,285.2 C487.5,287.8 490.2,291.1 493.1,294.0 C496.1,296.9 498.7,299.1 502.0,302.8 C505.3,306.5 508.5,311.3 512.8,316.2 C517.0,321.1 522.6,326.2 527.5,332.3 C532.4,338.4 537.3,346.8 542.2,352.9 C547.1,359.0 552.9,363.9 556.8,369.0 C560.7,374.1 562.5,379.1 565.7,383.7 C568.9,388.3 572.1,392.2 576.0,396.9 C579.9,401.6 585.1,407.6 589.1,412.0 C593.1,416.4 596.2,419.7 600.0,423.0 C603.8,426.3 608.0,428.8 611.7,431.7 C615.4,434.6 617.8,436.9 622.0,440.6 C626.2,444.3 631.8,449.9 636.7,453.8 C641.6,457.7 646.5,461.1 651.4,464.0 C656.3,466.9 661.2,469.1 666.1,471.4 C671.0,473.7 675.9,476.1 680.8,478.0 C685.7,479.9 690.5,481.3 695.4,483.1 C700.3,484.9 705.7,487.5 710.1,489.0 C714.5,490.5 718.2,491.8 721.9,492.0 C725.6,492.2 728.1,491.7 732.2,490.5 C736.4,489.3 741.9,486.7 746.8,484.6 C751.7,482.5 756.6,480.3 761.5,478.0 C766.4,475.7 771.3,473.3 776.2,470.7 C781.1,468.1 786.9,464.9 790.9,462.6 C794.9,460.3 794.2,460.1 800.0,456.7 C805.8,453.3 819.0,445.7 825.5,442.0 C832.0,438.3 834.1,436.8 838.7,434.3 C843.4,431.8 848.5,428.9 853.4,426.9 C858.3,424.9 863.2,423.7 868.1,422.5 C873.0,421.3 877.9,420.7 882.8,419.6 C887.7,418.5 892.6,417.1 897.5,415.9 C902.4,414.7 907.3,412.9 912.2,412.2 C917.1,411.5 921.9,411.9 926.8,411.5 C931.7,411.1 936.6,410.6 941.5,410.0 C946.4,409.4 948.2,408.2 956.2,407.8 C964.2,407.4 979.0,407.7 989.4,407.8 C999.8,407.9 1010.3,408.5 1018.7,408.6 C1027.1,408.7 1030.9,408.9 1040.0,408.5 C1049.1,408.1 1062.1,407.1 1073.2,406.2 C1084.3,405.3 1095.3,404.5 1106.4,402.9 C1117.5,401.2 1128.5,398.7 1139.6,396.3 C1150.7,393.9 1161.7,391.8 1172.8,388.5 C1183.9,385.2 1198.6,379.7 1206.0,376.4 C1213.4,373.1 1212.9,371.3 1217.0,368.6 C1221.1,365.9 1225.2,363.1 1230.4,360.2 C1235.6,357.3 1245.1,352.9 1248.0,351.4" fill="none" stroke="#008000" stroke-width="3.1" stroke-linejoin="round" stroke-linecap="round"/><path d="M78.0,329.2 C82.1,328.4 96.0,325.9 102.5,324.6 C109.0,323.3 112.7,322.4 117.0,321.4 C121.3,320.4 124.2,319.0 128.5,318.8 C132.8,318.6 138.4,319.7 143.0,320.0 C147.6,320.3 151.7,320.5 156.0,320.7 C160.3,320.9 164.7,320.8 169.0,321.4 C173.3,321.9 177.7,323.1 182.0,324.0 C186.3,324.9 190.7,326.2 195.0,326.6 C199.3,327.0 203.7,326.9 208.0,326.6 C212.3,326.3 216.0,327.3 221.0,324.6 C226.0,321.9 232.7,315.5 238.0,310.5 C243.3,305.5 247.8,299.9 252.7,294.6 C257.6,289.3 262.5,284.0 267.4,278.5 C272.3,273.0 277.1,267.2 282.0,261.6 C286.9,256.0 292.3,249.8 296.7,244.7 C301.1,239.5 304.6,234.9 308.5,230.7 C312.4,226.5 316.8,221.8 320.2,219.6 C323.6,217.4 326.1,217.5 329.0,217.4 C331.9,217.3 334.7,217.7 337.9,218.8 C341.1,219.9 344.7,222.0 348.1,224.0 C351.5,226.0 354.7,228.4 358.4,230.6 C362.1,232.8 365.8,234.1 370.2,237.3 C374.6,240.5 379.9,245.6 384.8,249.8 C389.7,254.0 394.6,257.8 399.5,262.3 C404.4,266.8 409.3,272.6 414.2,277.0 C419.1,281.4 424.8,285.4 428.9,288.7 C433.0,292.0 435.7,294.5 438.8,296.9 C441.9,299.2 444.6,300.3 447.6,302.8 C450.6,305.3 453.5,307.3 457.0,311.7 C460.5,316.1 465.5,323.5 468.7,329.4 C471.9,335.3 473.2,341.4 476.1,347.0 C479.1,352.6 483.0,356.7 486.4,363.1 C489.8,369.5 493.8,379.1 496.6,385.2 C499.4,391.3 500.3,394.4 503.4,400.0 C506.5,405.6 511.5,411.9 515.2,419.0 C518.9,426.1 522.0,435.2 525.4,442.6 C528.8,450.0 532.5,456.5 535.7,463.1 C538.9,469.7 541.6,476.1 544.5,482.2 C547.4,488.3 550.8,495.1 553.3,500.0 C555.8,504.9 556.8,507.5 559.2,511.7 C561.7,515.9 565.1,521.3 568.0,525.0 C570.9,528.7 573.4,531.7 576.8,533.8 C580.2,535.9 584.9,536.8 588.6,537.4 C592.3,538.0 594.7,538.1 598.9,537.4 C603.1,536.7 608.5,534.7 613.6,533.0 C618.7,531.3 624.3,529.4 629.4,527.2 C634.5,525.0 639.1,523.1 644.0,519.9 C648.9,516.7 654.5,512.0 658.7,508.1 C662.9,504.2 665.6,500.6 669.0,496.4 C672.4,492.2 675.6,487.0 679.3,483.1 C683.0,479.2 687.1,475.6 691.0,472.9 C694.9,470.2 699.1,468.7 702.8,467.0 C706.5,465.3 709.4,465.3 713.1,462.6 C716.8,459.9 720.4,455.2 724.8,450.8 C729.2,446.4 734.4,441.3 739.5,436.2 C744.6,431.1 752.0,423.5 755.7,420.0 C759.4,416.5 758.1,416.9 761.5,415.2 C764.9,413.5 771.3,412.2 776.2,410.0 C781.1,407.8 787.8,403.7 790.9,402.0 C794.0,400.3 791.6,401.3 794.7,399.8 C797.8,398.3 804.5,394.7 809.4,393.1 C814.3,391.5 819.2,390.3 824.1,390.2 C829.0,390.1 833.8,391.4 838.7,392.4 C843.6,393.4 848.5,394.5 853.4,396.1 C858.3,397.7 863.2,400.1 868.1,402.0 C873.0,403.9 877.9,406.0 882.8,407.8 C887.7,409.6 892.6,411.4 897.5,413.0 C902.4,414.6 907.3,416.1 912.2,417.4 C917.1,418.7 921.9,419.9 926.8,421.0 C931.7,422.1 936.0,423.4 941.5,424.0 C947.0,424.6 954.5,424.9 960.0,424.7 C965.5,424.4 969.8,423.9 974.7,422.5 C979.6,421.1 984.5,418.2 989.4,416.6 C994.3,415.0 999.7,414.2 1004.1,413.0 C1008.5,411.8 1010.9,410.9 1015.8,409.3 C1020.7,407.7 1029.4,404.8 1033.4,403.4 C1037.4,402.0 1035.2,402.3 1040.0,400.7 C1044.8,399.1 1054.7,396.0 1062.1,394.0 C1069.5,392.0 1076.9,390.1 1084.3,388.5 C1091.7,386.9 1099.0,385.6 1106.4,384.1 C1113.8,382.6 1121.1,381.0 1128.5,379.7 C1135.9,378.4 1143.3,377.9 1150.7,376.4 C1158.1,374.9 1165.4,373.4 1172.8,370.8 C1180.2,368.2 1189.5,363.5 1195.0,360.9 C1200.5,358.3 1202.3,358.4 1206.0,355.3 C1209.7,352.2 1210.0,350.3 1217.0,342.0 C1224.0,333.7 1242.8,311.6 1248.0,305.5" fill="none" stroke="#0000ff" stroke-width="3.1" stroke-linejoin="round" stroke-linecap="round"/><path d="M78.0,326.0 C80.2,325.7 86.9,325.1 91.0,324.0 C95.1,322.9 98.2,320.7 102.5,319.4 C106.8,318.1 113.5,316.9 117.0,316.2 C120.5,315.5 121.4,315.2 123.6,315.3 C125.8,315.4 126.8,316.0 130.0,316.8 C133.2,317.6 138.7,319.1 143.0,320.0 C147.3,320.9 151.7,321.4 156.0,322.0 C160.3,322.6 164.7,322.5 169.0,323.3 C173.3,324.1 177.7,325.3 182.0,326.6 C186.3,327.9 191.7,330.0 195.0,331.0 C198.3,332.0 199.5,332.4 201.7,332.4 C203.9,332.4 204.8,332.4 208.0,331.2 C211.2,330.0 216.7,328.8 221.0,325.3 C225.3,321.8 229.7,315.9 234.0,310.3 C238.3,304.7 243.2,297.2 246.8,291.7 C250.4,286.1 252.7,282.4 255.6,277.0 C258.5,271.6 261.5,264.5 264.4,259.4 C267.3,254.3 270.3,250.8 273.2,246.2 C276.1,241.5 280.0,235.0 282.0,231.5 C284.0,228.0 282.6,228.6 285.0,225.4 C287.4,222.2 293.8,215.1 296.7,212.2 C299.6,209.3 300.2,208.3 302.6,207.8 C305.1,207.3 308.0,208.3 311.4,209.3 C314.8,210.3 319.8,212.5 323.2,213.7 C326.6,214.9 329.1,214.9 332.0,216.6 C334.9,218.3 337.9,221.3 340.8,224.0 C343.7,226.7 347.2,230.3 349.6,232.8 C352.1,235.3 352.1,235.1 355.5,238.8 C358.9,242.5 365.3,250.3 370.2,255.0 C375.1,259.6 379.9,262.8 384.8,266.7 C389.7,270.6 395.8,275.8 399.5,278.5 C403.2,281.2 404.4,281.6 406.9,282.9 C409.3,284.2 411.5,284.6 414.2,286.5 C416.9,288.4 420.4,292.1 423.0,294.6 C425.6,297.1 427.3,298.9 430.0,301.3 C432.7,303.7 434.9,304.9 439.4,308.8 C443.9,312.8 452.1,318.4 457.0,325.0 C461.9,331.6 465.5,341.4 468.7,348.5 C471.9,355.6 473.4,361.1 476.1,367.5 C478.8,373.9 482.0,379.2 484.9,386.6 C487.8,394.0 491.1,405.9 493.7,412.0 C496.3,418.1 498.1,418.9 500.5,423.5 C502.9,428.1 505.4,433.2 507.8,439.6 C510.2,446.0 513.0,455.3 515.2,461.7 C517.4,468.1 519.0,472.4 521.0,477.8 C523.0,483.2 524.4,488.8 526.9,494.0 C529.4,499.2 532.8,504.4 535.7,508.8 C538.6,513.2 541.3,517.2 544.5,520.6 C547.7,524.0 551.4,526.2 554.8,529.4 C558.2,532.6 561.9,536.7 565.1,539.6 C568.3,542.5 571.0,545.4 573.9,547.0 C576.8,548.6 579.8,549.3 582.7,549.2 C585.6,549.1 588.1,547.9 591.5,546.3 C594.9,544.7 599.4,542.2 603.3,539.6 C607.2,537.0 610.6,534.3 615.0,530.8 C619.4,527.3 624.6,522.7 629.4,518.4 C634.2,514.1 639.1,510.1 644.0,505.2 C648.9,500.3 653.8,494.4 658.7,489.0 C663.6,483.6 668.5,477.1 673.4,472.9 C678.3,468.7 683.2,466.7 688.1,464.0 C693.0,461.3 697.9,460.1 702.8,456.7 C707.7,453.3 712.6,448.1 717.5,443.5 C722.4,438.9 727.3,433.0 732.2,428.8 C737.1,424.6 741.9,421.6 746.8,418.1 C751.7,414.6 756.6,411.7 761.5,407.8 C766.4,403.9 771.5,398.2 776.2,394.6 C781.0,391.0 786.0,387.5 790.0,386.0 C794.0,384.5 796.8,385.2 800.0,385.5 C803.2,385.8 805.4,387.0 809.4,388.0 C813.4,389.0 819.2,390.2 824.1,391.7 C829.0,393.2 833.8,395.3 838.7,396.8 C843.6,398.3 848.5,398.9 853.4,400.5 C858.3,402.1 863.2,404.2 868.1,406.4 C873.0,408.6 877.9,411.8 882.8,413.7 C887.7,415.6 892.6,416.8 897.5,418.1 C902.4,419.5 907.3,420.6 912.2,421.8 C917.1,423.0 921.9,424.3 926.8,425.4 C931.7,426.5 937.6,428.1 941.5,428.4 C945.4,428.6 947.8,427.9 950.3,426.9 C952.8,425.9 952.8,423.7 956.2,422.5 C959.6,421.3 965.4,421.1 970.9,419.6 C976.4,418.1 983.9,415.4 989.4,413.7 C994.9,412.0 999.2,411.2 1004.1,409.3 C1009.0,407.4 1013.8,404.2 1018.7,402.0 C1023.6,399.8 1029.9,397.8 1033.4,396.1 C1037.0,394.4 1035.2,393.2 1040.0,391.9 C1044.8,390.6 1054.7,389.6 1062.1,388.5 C1069.5,387.4 1076.9,386.4 1084.3,385.2 C1091.7,384.0 1099.0,382.6 1106.4,381.5 C1113.8,380.4 1121.1,379.6 1128.5,378.6 C1135.9,377.6 1143.3,376.8 1150.7,375.3 C1158.1,373.8 1167.3,371.4 1172.8,369.7 C1178.3,368.0 1180.2,367.1 1183.9,365.3 C1187.6,363.5 1191.3,361.6 1195.0,358.7 C1198.7,355.8 1202.3,352.2 1206.0,347.6 C1209.7,343.0 1212.2,338.9 1217.0,331.0 C1221.8,323.1 1229.6,308.6 1234.8,300.0 C1240.0,291.4 1245.8,282.8 1248.0,279.3" fill="none" stroke="#400040" stroke-width="3.1" stroke-linejoin="round" stroke-linecap="round"/><path d="M78.0,316.8 C82.1,316.6 96.0,315.9 102.5,315.5 C109.0,315.1 112.4,314.2 117.0,314.2 C121.6,314.2 125.7,314.0 130.0,315.5 C134.3,317.0 138.7,320.9 143.0,323.3 C147.3,325.7 151.7,328.7 156.0,329.8 C160.3,330.9 164.7,329.6 169.0,329.8 C173.3,330.0 178.1,330.2 182.0,331.2 C185.9,332.2 188.3,335.3 192.6,335.7 C196.9,336.1 204.3,335.1 208.0,333.8 C211.7,332.5 212.9,330.1 214.7,328.0 C216.5,325.9 217.4,324.2 219.0,321.0 C220.6,317.8 222.0,315.2 224.5,308.6 C227.0,302.0 231.4,288.9 234.2,281.3 C236.9,273.7 238.9,268.1 241.0,263.0 C243.1,257.9 244.4,256.2 246.8,251.0 C249.2,245.8 252.2,238.0 255.6,231.5 C259.0,225.0 264.0,216.1 267.4,212.2 C270.8,208.2 273.0,208.5 276.2,207.8 C279.4,207.1 283.1,208.5 286.5,207.8 C289.9,207.1 293.8,203.9 296.7,203.4 C299.6,202.9 301.1,203.7 304.0,204.9 C306.9,206.1 310.7,207.6 314.4,210.8 C318.1,214.0 323.2,220.6 326.1,224.0 C329.0,227.4 329.6,228.1 332.0,231.5 C334.4,234.9 337.9,240.8 340.8,244.7 C343.7,248.6 346.2,251.6 349.6,255.0 C353.0,258.4 357.4,262.3 361.3,265.2 C365.2,268.1 369.2,270.6 373.1,272.6 C377.0,274.6 380.4,274.8 384.8,277.0 C389.2,279.2 395.1,282.6 399.5,285.8 C403.9,289.0 408.6,293.6 411.3,296.0 C414.0,298.4 413.7,297.9 415.9,300.0 C418.1,302.1 421.3,304.4 424.7,308.8 C428.1,313.2 432.5,322.0 436.4,326.4 C440.3,330.8 444.5,331.5 448.2,335.2 C451.9,338.9 455.6,344.1 458.5,348.5 C461.4,352.9 463.6,356.1 465.8,361.7 C468.0,367.3 469.8,373.8 471.7,382.2 C473.6,390.6 476.1,405.4 477.5,412.0 C478.9,418.6 478.1,414.4 480.0,422.0 C481.9,429.6 486.0,447.3 488.7,457.3 C491.4,467.3 493.4,475.5 496.1,482.2 C498.8,488.9 501.2,492.3 504.9,497.5 C508.6,502.7 513.5,508.1 518.1,513.2 C522.8,518.3 527.9,523.4 532.8,528.0 C537.7,532.6 543.1,537.7 547.5,541.1 C551.9,544.5 555.5,545.2 559.2,548.5 C562.9,551.8 565.8,559.0 569.5,561.0 C573.2,563.0 577.5,562.5 581.2,560.2 C584.9,557.9 588.3,552.1 591.5,547.0 C594.7,541.9 597.4,535.9 600.3,529.4 C603.2,522.9 605.9,514.1 608.8,508.1 C611.7,502.1 614.2,496.1 617.6,493.4 C621.0,490.7 625.0,492.2 629.4,492.0 C633.8,491.8 639.6,492.8 644.0,492.0 C648.4,491.2 652.6,490.2 655.8,487.5 C659.0,484.8 660.6,480.7 663.1,475.8 C665.6,470.9 667.8,463.1 670.5,458.2 C673.2,453.3 675.9,449.7 679.3,446.4 C682.7,443.1 687.1,439.5 691.0,438.4 C694.9,437.3 698.9,439.7 702.8,440.0 C706.7,440.3 711.3,440.9 714.5,440.0 C717.7,439.1 718.9,439.3 721.9,434.7 C724.9,430.1 729.0,418.1 732.2,412.2 C735.4,406.2 737.3,403.1 741.0,399.0 C744.7,394.9 749.6,389.9 754.2,387.3 C758.9,384.7 764.0,383.9 768.9,383.6 C773.8,383.4 779.3,385.2 783.6,385.8 C787.9,386.4 790.4,386.6 794.7,387.3 C799.0,388.0 804.5,388.7 809.4,390.2 C814.3,391.7 819.2,394.1 824.1,396.1 C829.0,398.1 833.8,400.1 838.7,402.0 C843.6,403.9 848.5,406.1 853.4,407.8 C858.3,409.5 863.2,410.0 868.1,412.2 C873.0,414.4 877.9,418.8 882.8,421.0 C887.7,423.2 892.6,424.2 897.5,425.4 C902.4,426.6 907.3,427.9 912.2,428.4 C917.1,428.9 921.9,428.6 926.8,428.4 C931.7,428.1 936.6,428.4 941.5,426.9 C946.4,425.4 951.3,422.1 956.2,419.6 C961.1,417.2 965.4,415.0 970.9,412.2 C976.4,409.4 983.9,405.1 989.4,402.7 C994.9,400.2 999.2,399.3 1004.1,397.5 C1009.0,395.7 1013.8,393.2 1018.7,391.7 C1023.6,390.2 1029.9,389.2 1033.4,388.7 C1037.0,388.2 1035.2,389.3 1040.0,388.5 C1044.8,387.7 1054.7,385.4 1062.1,384.1 C1069.5,382.8 1076.9,382.1 1084.3,380.8 C1091.7,379.5 1099.0,377.7 1106.4,376.4 C1113.8,375.1 1121.1,373.9 1128.5,373.0 C1135.9,372.1 1144.8,371.5 1150.7,370.8 C1156.6,370.1 1160.3,369.7 1164.0,368.6 C1167.7,367.5 1169.5,366.8 1172.8,364.2 C1176.1,361.6 1180.2,357.5 1183.9,353.1 C1187.6,348.7 1191.3,344.2 1195.0,337.6 C1198.7,331.0 1203.0,320.1 1206.0,313.3 C1209.0,306.5 1210.4,303.1 1213.0,297.0 C1215.6,290.9 1218.7,282.3 1221.6,276.4 C1224.5,270.5 1228.2,265.4 1230.4,261.7 C1232.6,258.0 1232.8,256.6 1234.8,254.3 C1236.8,252.0 1240.0,248.2 1242.2,247.7 C1244.4,247.2 1247.0,250.8 1248.0,251.4" fill="none" stroke="#7fffd4" stroke-width="2.2" stroke-linejoin="round" stroke-linecap="round"/></g><rect x="31" y="245" width="47" height="16" fill="#000"/><text x="32.5" y="256.7" font-size="10.7" fill="#ff0000">28344.04</text><rect x="1314" y="245" width="46" height="16" fill="#000"/><text x="1315.5" y="256.7" font-size="10.7" fill="#ff0000">28344.04</text><rect x="78" y="667.5" width="1232" height="1.5" fill="#000"/><rect x="78" y="684" width="1232" height="1" fill="#000"/><rect x="77" y="668" width="2" height="32" fill="#808080"/><text x="80.0" y="681" font-size="12" fill="#000">25</text><line x1="102.5" y1="668" x2="102.5" y2="684" stroke="#000" stroke-width="1"/><text x="104.0" y="681" font-size="12" fill="#000">2</text><line x1="128.5" y1="668" x2="128.5" y2="684" stroke="#000" stroke-width="1"/><text x="130.0" y="681" font-size="12" fill="#000">9</text><line x1="155.5" y1="668" x2="155.5" y2="684" stroke="#000" stroke-width="1"/><text x="157.0" y="681" font-size="12" fill="#000">16</text><line x1="181.5" y1="668" x2="181.5" y2="684" stroke="#000" stroke-width="1"/><text x="183.0" y="681" font-size="12" fill="#000">23</text><line x1="208.5" y1="668" x2="208.5" y2="684" stroke="#000" stroke-width="1"/><line x1="219.5" y1="668" x2="219.5" y2="684" stroke="#000" stroke-width="1"/><text x="221.0" y="681" font-size="12" fill="#000">6</text><line x1="245.5" y1="668" x2="245.5" y2="684" stroke="#000" stroke-width="1"/><text x="247.0" y="681" font-size="12" fill="#000">13</text><line x1="272.5" y1="668" x2="272.5" y2="684" stroke="#000" stroke-width="1"/><text x="274.0" y="681" font-size="12" fill="#000">20</text><line x1="298.5" y1="668" x2="298.5" y2="684" stroke="#000" stroke-width="1"/><text x="300.0" y="681" font-size="12" fill="#000">27</text><line x1="325.5" y1="668" x2="325.5" y2="684" stroke="#000" stroke-width="1"/><text x="327.0" y="681" font-size="12" fill="#000">3</text><line x1="351.5" y1="668" x2="351.5" y2="684" stroke="#000" stroke-width="1"/><text x="353.0" y="681" font-size="12" fill="#000">10</text><line x1="378.5" y1="668" x2="378.5" y2="684" stroke="#000" stroke-width="1"/><text x="380.0" y="681" font-size="12" fill="#000">17</text><line x1="404.5" y1="668" x2="404.5" y2="684" stroke="#000" stroke-width="1"/><text x="406.0" y="681" font-size="12" fill="#000">24</text><line x1="431.5" y1="668" x2="431.5" y2="684" stroke="#000" stroke-width="1"/><text x="433.0" y="681" font-size="12" fill="#000">2</text><line x1="457.5" y1="668" x2="457.5" y2="684" stroke="#000" stroke-width="1"/><text x="459.0" y="681" font-size="12" fill="#000">9</text><line x1="484.5" y1="668" x2="484.5" y2="684" stroke="#000" stroke-width="1"/><text x="486.0" y="681" font-size="12" fill="#000">16</text><line x1="510.5" y1="668" x2="510.5" y2="684" stroke="#000" stroke-width="1"/><text x="512.0" y="681" font-size="12" fill="#000">23</text><line x1="537.5" y1="668" x2="537.5" y2="684" stroke="#000" stroke-width="1"/><text x="539.0" y="681" font-size="12" fill="#000">30</text><line x1="563.5" y1="668" x2="563.5" y2="684" stroke="#000" stroke-width="1"/><text x="565.0" y="681" font-size="12" fill="#000">6</text><line x1="584.5" y1="668" x2="584.5" y2="684" stroke="#000" stroke-width="1"/><text x="586.0" y="681" font-size="12" fill="#000">14</text><line x1="606.5" y1="668" x2="606.5" y2="684" stroke="#000" stroke-width="1"/><text x="608.0" y="681" font-size="12" fill="#000">20</text><line x1="632.5" y1="668" x2="632.5" y2="684" stroke="#000" stroke-width="1"/><text x="634.0" y="681" font-size="12" fill="#000">27</text><line x1="653.5" y1="668" x2="653.5" y2="684" stroke="#000" stroke-width="1"/><text x="655.0" y="681" font-size="12" fill="#000">4</text><line x1="680.5" y1="668" x2="680.5" y2="684" stroke="#000" stroke-width="1"/><text x="682.0" y="681" font-size="12" fill="#000">11</text><line x1="706.5" y1="668" x2="706.5" y2="684" stroke="#000" stroke-width="1"/><text x="708.0" y="681" font-size="12" fill="#000">18</text><line x1="733.5" y1="668" x2="733.5" y2="684" stroke="#000" stroke-width="1"/><text x="735.0" y="681" font-size="12" fill="#000">27</text><line x1="775.5" y1="668" x2="775.5" y2="684" stroke="#000" stroke-width="1"/><text x="777.0" y="681" font-size="12" fill="#000">8</text><line x1="796.5" y1="668" x2="796.5" y2="684" stroke="#000" stroke-width="1"/><text x="798.0" y="681" font-size="12" fill="#000">15</text><line x1="823.5" y1="668" x2="823.5" y2="684" stroke="#000" stroke-width="1"/><text x="825.0" y="681" font-size="12" fill="#000">22</text><line x1="849.5" y1="668" x2="849.5" y2="684" stroke="#000" stroke-width="1"/><text x="851.0" y="681" font-size="12" fill="#000">29</text><line x1="876.5" y1="668" x2="876.5" y2="684" stroke="#000" stroke-width="1"/><text x="878.0" y="681" font-size="12" fill="#000">6</text><line x1="902.5" y1="668" x2="902.5" y2="684" stroke="#000" stroke-width="1"/><text x="904.0" y="681" font-size="12" fill="#000">13</text><line x1="929.5" y1="668" x2="929.5" y2="684" stroke="#000" stroke-width="1"/><text x="931.0" y="681" font-size="12" fill="#000">20</text><line x1="955.5" y1="668" x2="955.5" y2="684" stroke="#000" stroke-width="1"/><text x="957.0" y="681" font-size="12" fill="#000">27</text><line x1="998.5" y1="668" x2="998.5" y2="684" stroke="#000" stroke-width="1"/><text x="1000.0" y="681" font-size="12" fill="#000">10</text><line x1="1024.5" y1="668" x2="1024.5" y2="684" stroke="#000" stroke-width="1"/><text x="1026.0" y="681" font-size="12" fill="#000">17</text><line x1="1051.5" y1="668" x2="1051.5" y2="684" stroke="#000" stroke-width="1"/><text x="1053.0" y="681" font-size="12" fill="#000">24</text><line x1="1077.5" y1="668" x2="1077.5" y2="684" stroke="#000" stroke-width="1"/><text x="1079.0" y="681" font-size="12" fill="#000">31</text><line x1="1104.5" y1="668" x2="1104.5" y2="684" stroke="#000" stroke-width="1"/><text x="1106.0" y="681" font-size="12" fill="#000">7</text><line x1="1130.5" y1="668" x2="1130.5" y2="684" stroke="#000" stroke-width="1"/><text x="1132.0" y="681" font-size="12" fill="#000">14</text><line x1="1157.5" y1="668" x2="1157.5" y2="684" stroke="#000" stroke-width="1"/><text x="1159.0" y="681" font-size="12" fill="#000">21</text><line x1="1183.5" y1="668" x2="1183.5" y2="684" stroke="#000" stroke-width="1"/><text x="1185.0" y="681" font-size="12" fill="#000">28</text><line x1="1205.5" y1="668" x2="1205.5" y2="684" stroke="#000" stroke-width="1"/><text x="1207.0" y="681" font-size="12" fill="#000">5</text><line x1="1231.5" y1="668" x2="1231.5" y2="684" stroke="#000" stroke-width="1"/><text x="1233.0" y="681" font-size="12" fill="#000">12</text><line x1="1258.5" y1="668" x2="1258.5" y2="684" stroke="#000" stroke-width="1"/><text x="1260.0" y="681" font-size="12" fill="#000">19</text><line x1="1284.5" y1="668" x2="1284.5" y2="684" stroke="#000" stroke-width="1"/><text x="1286.0" y="681" font-size="12" fill="#000">26</text><line x1="102.5" y1="684" x2="102.5" y2="700" stroke="#000" stroke-width="1"/><text x="104.0" y="697" font-size="12" fill="#000">December</text><line x1="208.5" y1="684" x2="208.5" y2="700" stroke="#000" stroke-width="1"/><text x="210.0" y="697" font-size="12" fill="#000">2020</text><line x1="325.5" y1="684" x2="325.5" y2="700" stroke="#000" stroke-width="1"/><text x="327.0" y="697" font-size="12" fill="#000">February</text><line x1="431.5" y1="684" x2="431.5" y2="700" stroke="#000" stroke-width="1"/><text x="433.0" y="697" font-size="12" fill="#000">March</text><line x1="547.5" y1="684" x2="547.5" y2="700" stroke="#000" stroke-width="1"/><text x="549.0" y="697" font-size="12" fill="#000">April</text><line x1="653.5" y1="684" x2="653.5" y2="700" stroke="#000" stroke-width="1"/><text x="655.0" y="697" font-size="12" fill="#000">May</text><line x1="749.5" y1="684" x2="749.5" y2="700" stroke="#000" stroke-width="1"/><text x="751.0" y="697" font-size="12" fill="#000">June</text><line x1="860.5" y1="684" x2="860.5" y2="700" stroke="#000" stroke-width="1"/><text x="862.0" y="697" font-size="12" fill="#000">July</text><line x1="971.5" y1="684" x2="971.5" y2="700" stroke="#000" stroke-width="1"/><text x="973.0" y="697" font-size="12" fill="#000">August</text><line x1="1083.5" y1="684" x2="1083.5" y2="700" stroke="#000" stroke-width="1"/><text x="1085.0" y="697" font-size="12" fill="#000">September</text><line x1="1199.5" y1="684" x2="1199.5" y2="700" stroke="#000" stroke-width="1"/><text x="1201.0" y="697" font-size="12" fill="#000">October</text></svg>
<svg class="a" style="left:0;top:0" width="1362" height="72"><g><path d="M0,8 L3,7.5 L7,8 L10,7 L12.5,9 L13,13 L11,15 L8,15 L5,14 L2,15 L0,15 Z" fill="#000"/><path d="M1.5,14 V16.5 M8.5,14.5 V17.5 M10.5,14.5 V16.5" stroke="#000" stroke-width="1.3"/><path d="M0,5.5 L2,3.8 L3,6.5 L4.5,4 L6.5,4 M5.5,4 V7.5 M13.5,4.5 Q9,3 9,6 L13.5,10.5" fill="none" stroke="#ff0000" stroke-width="1.6"/><circle cx="6.5" cy="10.5" r="0.8" fill="#20a0a0"/><path d="M9,12.5 L11,10.5" stroke="#fff" stroke-width="1"/></g><line x1="1241" y1="10.5" x2="1251" y2="10.5" stroke="#000" stroke-width="1"/><rect x="1286.5" y="7.5" width="7" height="7" fill="none" stroke="#000" stroke-width="1"/><path d="M1288.5,7.5 V5.5 H1295.5 V12.5 H1293.5" fill="none" stroke="#000" stroke-width="1"/><path d="M1332,5 L1342,15 M1342,5 L1332,15" stroke="#000" stroke-width="1"/><rect x="3.5" y="24.5" width="14" height="15" rx="1" fill="#fff" stroke="#000" stroke-width="1.3"/><rect x="4" y="25" width="13" height="2.5" fill="#000080"/><rect x="6" y="29" width="9" height="3.5" fill="#e000e0"/><rect x="10" y="29" width="5" height="3.5" fill="#2080ff"/><rect x="6" y="34" width="9" height="3.5" fill="#00c000"/><rect x="6" y="34" width="4" height="3.5" fill="#e0e000"/><rect x="1305.5" y="24.5" width="17" height="17" fill="#fff" stroke="#e3e3e3"/><rect x="1324.5" y="24.5" width="17" height="17" fill="#fff" stroke="#e3e3e3"/><rect x="1343.5" y="24.5" width="17" height="17" fill="#fff" stroke="#e3e3e3"/><rect x="1310" y="35" width="6" height="2" fill="#6c7a89"/><rect x="1329.5" y="31.5" width="5" height="4" fill="none" stroke="#6c7a89" stroke-width="1.2"/><path d="M1331.5,31.5 V29.5 H1337 V33.5 H1334.5" fill="none" stroke="#6c7a89" stroke-width="1.2"/><path d="M1349.5,30.5 L1355.5,36.5 M1355.5,30.5 L1349.5,36.5" stroke="#6c7a89" stroke-width="1.8"/></svg>
<svg class="a" style="left:0;top:0" width="1362" height="72" font-family="Liberation Sans, sans-serif"><rect x="0" y="48" width="1.5" height="21" fill="#a0a0a0"/><line x1="83.5" y1="50" x2="83.5" y2="68" stroke="#a0a0a0" stroke-width="1"/><line x1="137.5" y1="50" x2="137.5" y2="68" stroke="#a0a0a0" stroke-width="1"/><line x1="215.5" y1="50" x2="215.5" y2="68" stroke="#a0a0a0" stroke-width="1"/><line x1="245.5" y1="50" x2="245.5" y2="68" stroke="#a0a0a0" stroke-width="1"/><line x1="481.5" y1="50" x2="481.5" y2="68" stroke="#a0a0a0" stroke-width="1"/><line x1="299.5" y1="49" x2="299.5" y2="69" stroke="#a0a0a0" stroke-width="1"/><path d="M16.5,51.5 H23.5 L26.5,54.5 V64.5 H16.5 Z" fill="#fff" stroke="#000" stroke-width="1"/><path d="M23.5,51.5 V54.5 H26.5" fill="none" stroke="#000"/><path d="M37.5,54.5 H41.5 L43,56 H47.5 V64.5 H37.5 Z" fill="#ffff60" stroke="#000"/><path d="M38,64.5 L41.5,58.5 H52 L48,64.5 Z" fill="#808000" stroke="#000"/><path d="M46,53 Q49,50 51,54" fill="none" stroke="#000"/><rect x="62.5" y="51.5" width="13" height="13" fill="#808000" stroke="#000"/><rect x="65" y="52" width="8" height="5.5" fill="#fff"/><rect x="65" y="59.5" width="8" height="5" fill="#000"/><rect x="70" y="60.5" width="2" height="3" fill="#fff"/><path d="M93.5,52.5 H102.5 L104,57 H93 Z" fill="#fff" stroke="#000"/><rect x="90.5" y="57.5" width="16" height="6" rx="2" fill="#fff" stroke="#000"/><rect x="92" y="62" width="13" height="3" fill="#000"/><rect x="96" y="60" width="5" height="1" fill="#e0e000"/><path d="M115.5,51.5 H122 L125.5,55 V65.5 H115.5 Z" fill="#fff" stroke="#000"/><circle cx="125" cy="60" r="3.5" fill="#60d0ff" stroke="#000" stroke-width="1.2"/><line x1="127.5" y1="62.5" x2="131" y2="66" stroke="#000" stroke-width="1.6"/><path d="M150,52 L155,61 M157,52 L152,61" stroke="#a0a0a0" stroke-width="1.2"/><circle cx="151" cy="63.5" r="2" fill="none" stroke="#a0a0a0"/><circle cx="156" cy="63.5" r="2" fill="none" stroke="#a0a0a0"/><path d="M170.5,52.5 H176 L178,54.5 V61.5 H170.5 Z" fill="#fff" stroke="#000"/><path d="M176.5,56.5 H182 L184.5,59 V65.5 H176.5 Z" fill="#fff" stroke="#000080"/><path d="M178,60 H183 M178,62 H183" stroke="#000080"/><path d="M172,55 H176 M172,57 H176 M172,59 H176" stroke="#000"/><rect x="193.5" y="53.5" width="12" height="11" rx="2" fill="#a8a8a8" stroke="#a0a0a0"/><rect x="197" y="52" width="6" height="3" fill="#a0a0a0"/><rect x="200.5" y="58.5" width="8" height="7" fill="#f0f0f0" stroke="#a0a0a0"/><path d="M226,58 Q230,54 234,56 Q237,59 233,62" fill="none" stroke="#a0a0a0" stroke-width="1.4"/><path d="M225,55 L225,60 L230,60 Z" fill="#a0a0a0"/><circle cx="260.5" cy="58.5" r="5" fill="none" stroke="#000" stroke-width="1.2"/><path d="M253,58.5 H268 M260.5,51 V66" stroke="#000080" stroke-width="1.2"/><path d="M277.5,54.5 H283 V65.5 H277.5 Z" fill="#fff" stroke="#000"/><circle cx="285" cy="57" r="4.5" fill="#d8f0f0" stroke="#000" stroke-width="1.3"/><line x1="288" y1="60" x2="293" y2="65" stroke="#000" stroke-width="2"/><rect x="282" y="56" width="5" height="1.5" fill="#00c0c0"/><rect x="303.5" y="48.5" width="175" height="21" fill="#fff" stroke="#7a7a7a"/><rect x="308" y="52" width="13" height="13" fill="#c0c0c0" stroke="#000" stroke-width="1"/><path d="M310,61 L313,57 L315,59 L319,55" fill="none" stroke="#000" stroke-width="1"/><path d="M466,56.5 L470,60.5 L474,56.5" fill="none" stroke="#000" stroke-width="1"/><ellipse cx="497" cy="58" rx="5.5" ry="6.5" fill="#fff" stroke="#000" stroke-width="1.5"/><path d="M494,63 L497,55 L500,63 Z" fill="#e8d000" stroke="#000" stroke-width="0.8"/><rect x="493" y="63" width="9" height="2.5" fill="#000"/><circle cx="520.5" cy="58" r="4" fill="#f4f4f4" stroke="#808080"/><rect x="516" y="52" width="9" height="3" fill="#808080"/><path d="M514,66 Q520,60 527,66" fill="none" stroke="#a0a0a0" stroke-width="1.5"/><text x="538" y="64" font-size="14" font-style="italic" font-family="Liberation Serif" fill="#000">f</text><text x="544" y="65" font-size="8" fill="#000">(x)</text><path d="M571,51 L575,59" stroke="#000" stroke-width="2.2"/><path d="M569,55 H574" stroke="#000" stroke-width="1.2"/><path d="M568,58 Q565,62 567,64 M567,63 L575,60 L576,64" fill="none" stroke="#000" stroke-width="1.6"/><path d="M563,66 L577,66" stroke="#000" stroke-width="1.8"/><rect x="572" y="63" width="3" height="1.5" fill="#e0e000"/><text x="587.5" y="63.5" font-size="14.5" font-weight="bold" fill="#008000">$</text><path d="M610,65 V57 Q610,53 613,52 H616 V65 Z M619,65 V52 H622 Q625,53 625,57 V65 Z" fill="#000"/><rect x="615" y="56" width="5" height="4" fill="#000"/><rect x="611.5" y="61" width="3" height="3" fill="#fff"/><rect x="620.5" y="61" width="3" height="3" fill="#fff"/><path d="M633,51 L633,63 L636,60 L639,65 L641,64 L638.5,59 L642.5,59 Z" fill="#000"/><text x="640.5" y="62" font-size="15" font-weight="bold" fill="#000080">?</text><line x1="659.5" y1="44" x2="659.5" y2="70" stroke="#b0b0b0"/><line x1="664.5" y1="48" x2="664.5" y2="69" stroke="#a0a0a0"/><line x1="800.5" y1="44" x2="800.5" y2="70" stroke="#b0b0b0"/><rect x="677.5" y="52.5" width="9" height="7" fill="#fff" stroke="#000080" stroke-width="1.2"/><rect x="681.5" y="55.5" width="9" height="7" fill="#fff" stroke="#000080" stroke-width="1.2"/><rect x="684.5" y="58.5" width="9" height="6.5" fill="#fff" stroke="#000080" stroke-width="1.2"/><rect x="684.5" y="58.5" width="9" height="2" fill="#000080"/><rect x="703.5" y="51.5" width="14" height="14" fill="#fff" stroke="#000080" stroke-width="1.4"/><rect x="703.5" y="51.5" width="14" height="2.5" fill="#000080"/><line x1="710.5" y1="52" x2="710.5" y2="65" stroke="#000080" stroke-width="1.4"/><rect x="726.5" y="51.5" width="15" height="14" fill="#fff" stroke="#000080" stroke-width="1.4"/><rect x="726.5" y="51.5" width="15" height="2.5" fill="#000080"/><rect x="726.5" y="58" width="15" height="2.5" fill="#000080"/><rect x="751.5" y="51.5" width="14" height="14" fill="#fff" stroke="#000080" stroke-width="1.4"/><rect x="751.5" y="51.5" width="14" height="2.5" fill="#000080"/><rect x="751.5" y="58" width="14" height="2" fill="#000080"/><line x1="758.5" y1="52" x2="758.5" y2="65" stroke="#000080" stroke-width="1.4"/><rect x="775.5" y="51.5" width="14" height="14" fill="#fff" stroke="#000080" stroke-width="1.4"/><rect x="775.5" y="51.5" width="14" height="2.5" fill="#000080"/><rect x="775.5" y="58" width="14" height="2" fill="#000080"/><circle cx="782.5" cy="58.5" r="4.2" fill="#e8e000" stroke="#000" stroke-width="0.8"/><circle cx="782.5" cy="58.5" r="1.5" fill="#000"/><line x1="0" y1="70.5" x2="1362" y2="70.5" stroke="#fafafa"/></svg>
<div class="t" style="left:324.5px;top:53px;font-size:10.9px">Moving Average</div>
<svg class="a" style="left:0;top:0" width="28" height="768" font-family="Liberation Sans, sans-serif"><line x1="0" y1="395.5" x2="26" y2="395.5" stroke="#a0a0a0"/><line x1="0" y1="396.5" x2="26" y2="396.5" stroke="#fafafa"/><line x1="1" y1="78.5" x2="22" y2="78.5" stroke="#c0c0c0" stroke-width="1.5"/><rect x="0.5" y="86.5" width="22" height="20" fill="#cce4f7" stroke="#99d1ff"/><path d="M8.5,89.5 L8.5,101 L11,98.5 L13.5,103.5 L15,102.5 L12.8,97.8 L16.5,97.8 Z" fill="#fff" stroke="#000" stroke-width="1"/><path d="M4.5,118.5 H17.5 M11,112 V125" stroke="#000" stroke-width="1.2"/><line x1="1" y1="132.5" x2="21" y2="132.5" stroke="#a8a8a8"/><line x1="6" y1="141" x2="17" y2="152" stroke="#000" stroke-width="1.1"/><line x1="4" y1="168.5" x2="19" y2="168.5" stroke="#000" stroke-width="1.1"/><line x1="11.5" y1="183" x2="11.5" y2="197" stroke="#000" stroke-width="1.1"/><line x1="5" y1="205" x2="17" y2="219" stroke="#000" stroke-width="1"/><text x="3.5" y="218" font-size="8" font-weight="bold" font-family="Liberation Serif" fill="#000">s</text><text x="12" y="212" font-size="8" font-weight="bold" font-family="Liberation Serif" fill="#000">L</text><line x1="1" y1="234.5" x2="22" y2="234.5" stroke="#c0c0c0" stroke-width="1.5"/><rect x="1.5" y="246.5" width="9" height="19" fill="#e8e8e8" stroke="#c0c0c0"/><rect x="11.5" y="246.5" width="9" height="19" fill="#e8e8e8" stroke="#c0c0c0"/><path d="M4,256 L7,253 V259 Z M18,256 L15,253 V259 Z" fill="#000"/><line x1="1" y1="269.5" x2="21" y2="269.5" stroke="#a8a8a8"/><text x="3" y="289" font-size="11.5" fill="#000">abc</text><rect x="3.5" y="298.5" width="15" height="14" fill="#fff" stroke="#000"/><rect x="3.5" y="298.5" width="15" height="2" fill="#000080"/><line x1="4" y1="302.5" x2="18" y2="302.5" stroke="#000" stroke-width="1"/><line x1="4" y1="305" x2="18" y2="305" stroke="#000" stroke-width="1"/><line x1="4" y1="307.5" x2="18" y2="307.5" stroke="#000" stroke-width="1"/><line x1="4" y1="310" x2="18" y2="310" stroke="#000" stroke-width="1"/><line x1="6.5" y1="300" x2="6.5" y2="312" stroke="#000" stroke-width="1"/><line x1="9.5" y1="300" x2="9.5" y2="312" stroke="#000" stroke-width="1"/><line x1="12.5" y1="300" x2="12.5" y2="312" stroke="#000" stroke-width="1"/><line x1="15.5" y1="300" x2="15.5" y2="312" stroke="#000" stroke-width="1"/><line x1="1" y1="319.5" x2="21" y2="319.5" stroke="#a8a8a8"/><ellipse cx="11" cy="333.5" rx="6.5" ry="4" fill="none" stroke="#000" stroke-width="1.1"/><rect x="5.5" y="351.5" width="12" height="9" fill="none" stroke="#000" stroke-width="1.1"/><path d="M4.5,380.5 L11,373.5 L17.5,380.5 Z" fill="none" stroke="#000" stroke-width="1.1"/><line x1="0" y1="719.5" x2="26" y2="719.5" stroke="#a0a0a0"/></svg>
<svg class="a" style="left:0;top:0" width="1362" height="768" font-family="Liberation Sans, sans-serif"><rect x="26" y="700" width="1336" height="2" fill="#fff"/><path d="M37,706 L33,710 L37,714" fill="none" stroke="#606060" stroke-width="1.5"/><rect x="664" y="704" width="516" height="14" fill="#cdcdcd"/><path d="M1186,706 L1190,710 L1186,714" fill="none" stroke="#606060" stroke-width="1.5"/><line x1="1199.5" y1="703" x2="1199.5" y2="717" stroke="#a0a0a0"/><line x1="1240.5" y1="703" x2="1240.5" y2="717" stroke="#a0a0a0"/><line x1="1314.5" y1="703" x2="1314.5" y2="717" stroke="#a0a0a0"/><path d="M1207.5,713 Q1206,709 1209.5,706 M1212.5,707 Q1214,711 1210.5,714" fill="none" stroke="#000" stroke-width="1.6"/><path d="M1208,704.5 L1211.5,706 L1208.5,708.5 Z M1212,715.5 L1208.5,714 L1211.5,711.5 Z" fill="#000"/><text x="1223" y="715" font-size="11" font-weight="bold" font-family="Liberation Serif" fill="#000">D</text><path d="M1251.5,704 L1254,708 H1249 Z M1251.5,716 L1254,712 H1249 Z" fill="#000"/><line x1="1251.5" y1="707" x2="1251.5" y2="713" stroke="#000" stroke-width="1.5"/><path d="M1262,710 H1274 M1268,704 V716" stroke="#000" stroke-width="1.3"/><path d="M1268,703 L1270.5,706 H1265.5 Z M1268,717 L1270.5,714 H1265.5 Z M1261,710 L1264,707.5 V712.5 Z M1275,710 L1272,707.5 V712.5 Z" fill="#000"/><circle cx="1286" cy="710" r="4.5" fill="none" stroke="#000" stroke-width="1.2"/><line x1="1283.5" y1="710" x2="1288.5" y2="710" stroke="#000" stroke-width="1.2"/><circle cx="1302" cy="710" r="4.5" fill="none" stroke="#000" stroke-width="1.2"/><path d="M1299.5,710 H1304.5 M1302,707.5 V712.5" stroke="#000" stroke-width="1.2"/><path d="M1328,705 L1322,710 L1328,715 Z" fill="#000"/><path d="M1339,705 L1345,710 L1339,715 Z" fill="#000"/><rect x="1355.5" y="705.5" width="8" height="9" fill="none" stroke="#000"/><path d="M1357,708 H1362 M1357,710.5 H1362 M1357,713 H1362" stroke="#000"/><line x1="1.5" y1="724" x2="1.5" y2="746" stroke="#a0a0a0"/><rect x="9.5" y="725.5" width="129" height="19" fill="#fff" stroke="#7a7a7a"/><line x1="25" y1="735.5" x2="106" y2="735.5" stroke="#000" stroke-width="1"/><path d="M125,733 L129,737 L133,733" fill="none" stroke="#000"/><line x1="141.5" y1="726" x2="141.5" y2="744" stroke="#a0a0a0"/><rect x="145.5" y="725.5" width="99" height="19" fill="#fff" stroke="#7a7a7a"/><line x1="156" y1="735.5" x2="216" y2="735.5" stroke="#000" stroke-width="1"/><path d="M231,733 L235,737 L239,733" fill="none" stroke="#000"/><line x1="251.5" y1="722" x2="251.5" y2="748" stroke="#a8a8a8"/><line x1="256.5" y1="726" x2="256.5" y2="745" stroke="#a0a0a0"/><rect x="268.5" y="726.5" width="8" height="8" fill="#000000" stroke="#a0a0a0"/><rect x="268.5" y="736.5" width="8" height="8" fill="#000080" stroke="#a0a0a0"/><rect x="278.6" y="726.5" width="8" height="8" fill="#0000ff" stroke="#a0a0a0"/><rect x="278.6" y="736.5" width="8" height="8" fill="#008080" stroke="#a0a0a0"/><rect x="288.7" y="726.5" width="8" height="8" fill="#00ffff" stroke="#a0a0a0"/><rect x="288.7" y="736.5" width="8" height="8" fill="#008000" stroke="#a0a0a0"/><rect x="298.7" y="726.5" width="8" height="8" fill="#00ff00" stroke="#a0a0a0"/><rect x="298.7" y="736.5" width="8" height="8" fill="#800080" stroke="#a0a0a0"/><rect x="308.8" y="726.5" width="8" height="8" fill="#ff00ff" stroke="#a0a0a0"/><rect x="308.8" y="736.5" width="8" height="8" fill="#800000" stroke="#a0a0a0"/><rect x="318.9" y="726.5" width="8" height="8" fill="#ff0000" stroke="#a0a0a0"/><rect x="318.9" y="736.5" width="8" height="8" fill="#808000" stroke="#a0a0a0"/><rect x="329.0" y="726.5" width="8" height="8" fill="#ffff00" stroke="#a0a0a0"/><rect x="329.0" y="736.5" width="8" height="8" fill="#808080" stroke="#a0a0a0"/><rect x="339.1" y="726.5" width="8" height="8" fill="#ffffff" stroke="#a0a0a0"/><rect x="339.1" y="736.5" width="8" height="8" fill="#c0c0c0" stroke="#a0a0a0"/><rect x="317.5" y="725.5" width="10" height="10" fill="none" stroke="#808080" stroke-dasharray="1,1"/><path d="M352,733 H358 L355,737 Z" fill="#000"/><line x1="368.5" y1="722" x2="368.5" y2="748" stroke="#a8a8a8"/><line x1="373.5" y1="726" x2="373.5" y2="745" stroke="#a0a0a0"/><defs><linearGradient id="eg" x1="0" y1="0" x2="1" y2="0.3"><stop offset="0" stop-color="#1a8fd8"/><stop offset="0.6" stop-color="#33c3c0"/><stop offset="1" stop-color="#5fe07a"/></linearGradient><linearGradient id="eb" x1="0" y1="0" x2="0.3" y2="1"><stop offset="0" stop-color="#1478d0"/><stop offset="1" stop-color="#0b4a9a"/></linearGradient></defs><circle cx="395" cy="735" r="8.3" fill="url(#eb)"/><path d="M386.7,735 A8.3,8.3 0 0 1 403.3,735 Q403,739 398,739 Q400,733 395,732.5 Q390,732 386.7,735 Z" fill="url(#eg)"/><path d="M392,737 Q394,731.5 399,733.5 Q396,733.5 395,736.5 Q396,740 400,739.5 Q395,741.5 392,737 Z" fill="#fff"/><circle cx="419" cy="735" r="8.3" fill="url(#eb)"/><path d="M410.7,735 A8.3,8.3 0 0 1 427.3,735 Q427,739 422,739 Q424,733 419,732.5 Q414,732 410.7,735 Z" fill="url(#eg)"/><path d="M416,737 Q418,731.5 423,733.5 Q420,733.5 419,736.5 Q420,740 424,739.5 Q419,741.5 416,737 Z" fill="#fff"/><circle cx="443" cy="735" r="8.3" fill="url(#eb)"/><path d="M434.7,735 A8.3,8.3 0 0 1 451.3,735 Q451,739 446,739 Q448,733 443,732.5 Q438,732 434.7,735 Z" fill="url(#eg)"/><path d="M440,737 Q442,731.5 447,733.5 Q444,733.5 443,736.5 Q444,740 448,739.5 Q443,741.5 440,737 Z" fill="#fff"/><circle cx="466.6" cy="735" r="8.3" fill="url(#eb)"/><path d="M458.3,735 A8.3,8.3 0 0 1 474.90000000000003,735 Q474.6,739 469.6,739 Q471.6,733 466.6,732.5 Q461.6,732 458.3,735 Z" fill="url(#eg)"/><path d="M463.6,737 Q465.6,731.5 470.6,733.5 Q467.6,733.5 466.6,736.5 Q467.6,740 471.6,739.5 Q466.6,741.5 463.6,737 Z" fill="#fff"/><line x1="485.5" y1="722" x2="485.5" y2="748" stroke="#a8a8a8"/><line x1="490.5" y1="726" x2="490.5" y2="745" stroke="#a0a0a0"/><rect x="500.5" y="725.5" width="62" height="18" fill="#f0f0f0" stroke="#7a7a7a"/><line x1="501" y1="726" x2="562" y2="726" stroke="#404040"/><line x1="501" y1="726" x2="501" y2="743" stroke="#404040"/><line x1="567.5" y1="726" x2="567.5" y2="744" stroke="#a0a0a0"/><rect x="571.5" y="725.5" width="79" height="19" fill="#e3e3e3" stroke="#acacac"/><path d="M634,733 L638,737 L642,733" fill="none" stroke="#000"/><line x1="653.5" y1="726" x2="653.5" y2="744" stroke="#a0a0a0"/><rect x="657.5" y="725.5" width="149" height="19" fill="#e3e3e3" stroke="#acacac"/><path d="M793,733 L797,737 L801,733" fill="none" stroke="#000"/><line x1="810.5" y1="726" x2="810.5" y2="744" stroke="#a0a0a0"/><rect x="814.5" y="725.5" width="62" height="19" fill="#cccccc" stroke="#bfbfbf"/><line x1="884.5" y1="722" x2="884.5" y2="748" stroke="#a8a8a8"/><line x1="0" y1="747.5" x2="1362" y2="747.5" stroke="#b8b8b8"/><line x1="0" y1="748.5" x2="1362" y2="748.5" stroke="#fafafa"/><line x1="1107.5" y1="751" x2="1107.5" y2="766" stroke="#d0d0d0"/><line x1="1163.5" y1="751" x2="1163.5" y2="766" stroke="#d0d0d0"/><line x1="1234.5" y1="751" x2="1234.5" y2="766" stroke="#d0d0d0"/><line x1="1260.5" y1="751" x2="1260.5" y2="766" stroke="#d0d0d0"/><line x1="1301.5" y1="751" x2="1301.5" y2="766" stroke="#d0d0d0"/><line x1="1325.5" y1="751" x2="1325.5" y2="766" stroke="#d0d0d0"/><rect x="0" y="766" width="1362" height="2" fill="#3c3c3c"/></svg>
<div class="t" style="left:503px;top:729px;font-size:11.5px">NSEASI</div>
<div class="t" style="left:663px;top:730px;font-size:11.5px">&lt;No Vendor&gt;</div>
<div class="t" style="left:831px;top:729px;font-size:11.5px;color:#838383">Trade</div>
<div class="t" style="left:-0.5px;top:754px;font-size:12px;letter-spacing:-0.55px">For Help, press F1</div>
<div class="t" style="left:1043px;top:754px;font-size:12px;letter-spacing:-0.28px">07/04/2020</div>
<div class="t" style="left:1168px;top:754px;font-size:12px;letter-spacing:-0.3px">28,722.26</div>
<div class="t" style="left:1265px;top:754px;font-size:12px;letter-spacing:-0.3px">23:54</div>
<div class="t" style="left:1310px;top:753px;font-size:13px;font-weight:bold;color:#008000">$</div>
<div class="t" style="left:1330px;top:754px;font-size:12px;letter-spacing:-0.3px">NUM</div>
<div class="t" style="left:1069px;top:690px;font-size:20px;color:rgba(120,120,120,0.42)">Activate Windows</div>
<div class="t" style="left:1069px;top:715px;font-size:15px;color:rgba(120,120,120,0.42)">Go to Settings to activate Windows.</div></body></html>
